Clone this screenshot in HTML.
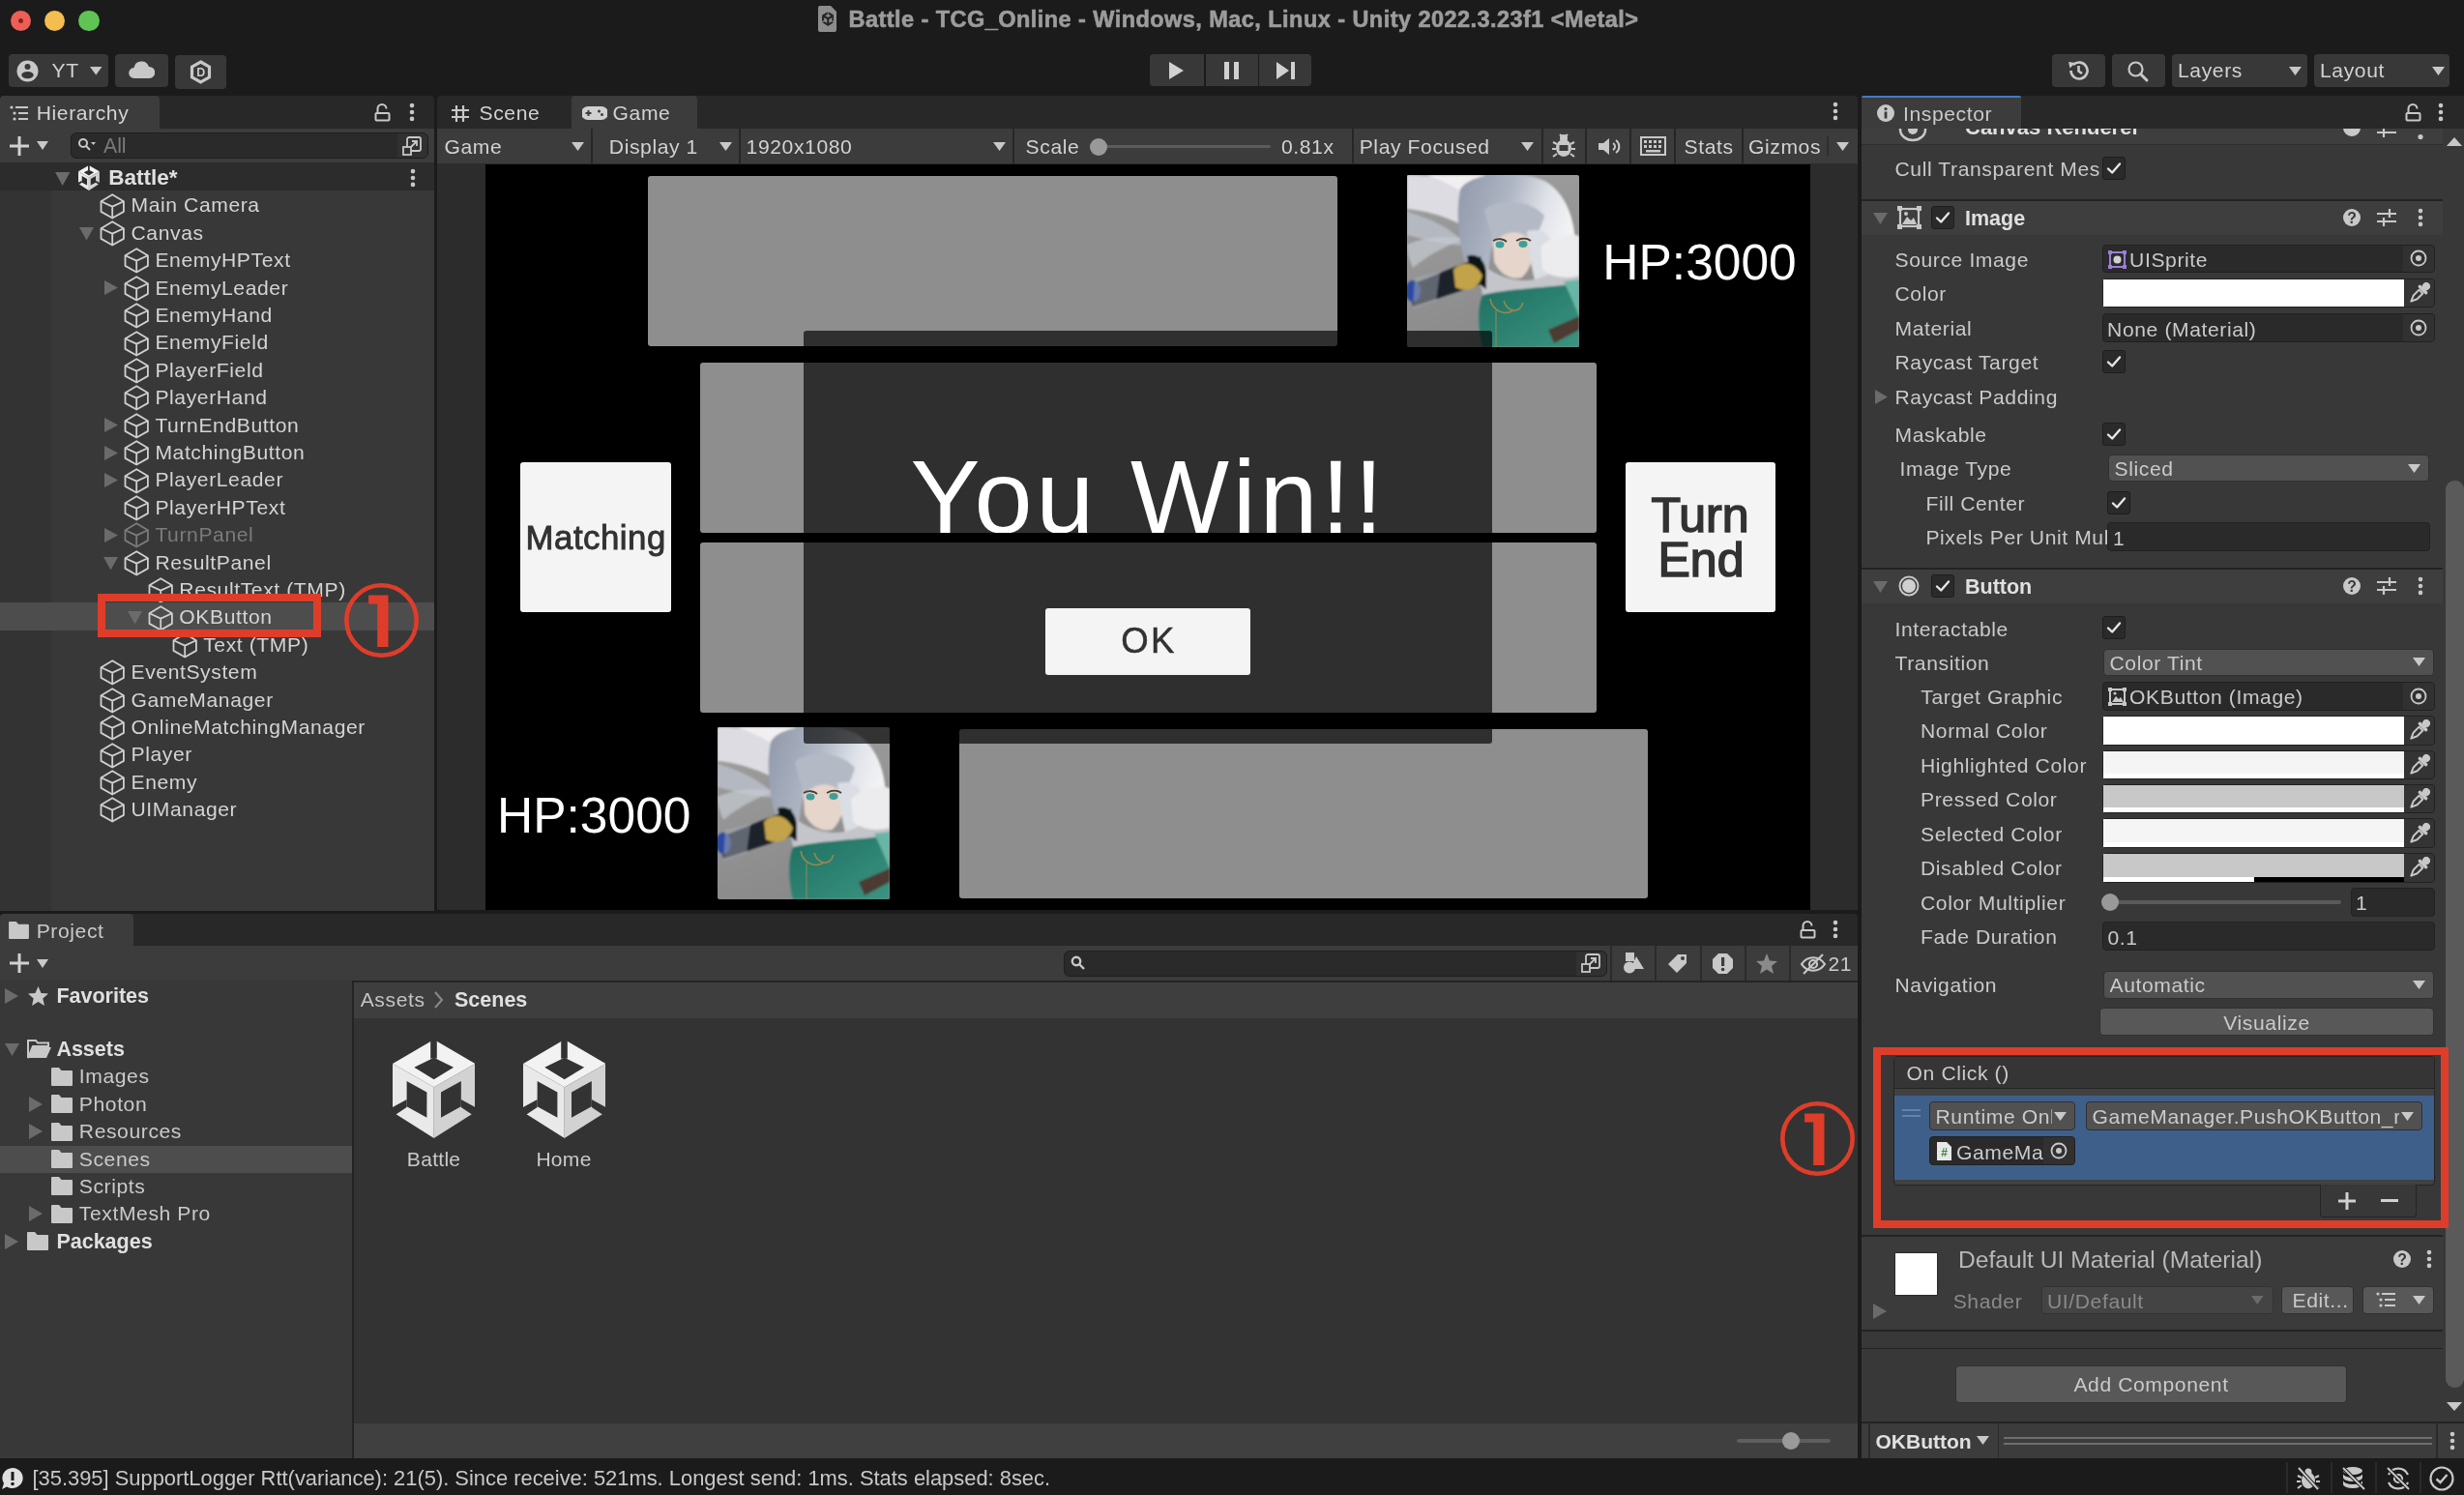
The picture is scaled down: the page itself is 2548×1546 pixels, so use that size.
<!DOCTYPE html><html><head><meta charset="utf-8"><style>
*{margin:0;padding:0;box-sizing:border-box}
html,body{width:2548px;height:1546px;overflow:hidden;background:#1b1b1b}
body{position:relative;font-family:"Liberation Sans",sans-serif}
.a{position:absolute}
.t{white-space:nowrap}
</style></head><body><div id="root" style="position:absolute;left:0;top:0;width:2548px;height:1546px;overflow:hidden;will-change:transform"><div class="a" style="left:0px;top:0px;width:2548px;height:97px;background:#1b1b1b;"></div>
<div class="a" style="left:10.599999999999998px;top:10.6px;width:21.600000000000005px;height:21.6px;background:#ec5f57;border-radius:50%;"></div>
<div class="a" style="left:45.7px;top:10.6px;width:21.599999999999994px;height:21.6px;background:#f4bd4f;border-radius:50%;"></div>
<div class="a" style="left:81.2px;top:10.6px;width:21.599999999999994px;height:21.6px;background:#5fc453;border-radius:50%;"></div>
<div class="a" style="left:19px;top:19px;width:5px;height:5px;background:#8e1f18;border-radius:50%;"></div>
<div class="a" style="left:0px;top:99px;width:449px;height:34px;background:#282828;border-top-left-radius:4px;border-top-right-radius:4px;"></div>
<div class="a" style="left:0px;top:99px;width:165px;height:34px;background:#3c3c3c;border-top-left-radius:4px;border-top-right-radius:4px;"></div>
<div class="a" style="left:0px;top:133px;width:449px;height:35px;background:#3c3c3c;"></div>
<div class="a" style="left:0px;top:168px;width:449px;height:29px;background:#2c2c2c;"></div>
<div class="a" style="left:0px;top:197px;width:449px;height:745px;background:#383838;"></div>
<div class="a" style="left:0px;top:197px;width:53px;height:745px;background:#333333;"></div>
<div class="a" style="left:452px;top:99px;width:1469px;height:34px;background:#282828;border-top-left-radius:4px;border-top-right-radius:4px;"></div>
<div class="a" style="left:591px;top:99px;width:130px;height:34px;background:#3c3c3c;border-top-left-radius:4px;border-top-right-radius:4px;"></div>
<div class="a" style="left:452px;top:133px;width:1469px;height:36px;background:#3c3c3c;"></div>
<div class="a" style="left:452px;top:169px;width:1469px;height:772px;background:#2c2c2c;"></div>
<div class="a" style="left:502px;top:170px;width:1370px;height:771px;background:#000000;"></div>
<div class="a" style="left:1925px;top:99px;width:623px;height:34px;background:#282828;border-top-left-radius:4px;"></div>
<div class="a" style="left:1925px;top:99px;width:165px;height:34px;background:#3c3c3c;border-top-left-radius:4px;border-top-right-radius:4px;"></div>
<div class="a" style="left:1925px;top:99px;width:165px;height:2px;background:#3f7dc4;border-top-left-radius:4px;border-top-right-radius:4px;"></div>
<div class="a" style="left:1925px;top:133px;width:623px;height:1338px;background:#383838;"></div>
<div class="a" style="left:0px;top:945px;width:1921px;height:33px;background:#282828;border-top-left-radius:4px;border-top-right-radius:4px;"></div>
<div class="a" style="left:0px;top:945px;width:138px;height:33px;background:#3c3c3c;border-top-left-radius:4px;border-top-right-radius:4px;"></div>
<div class="a" style="left:0px;top:978px;width:1921px;height:36px;background:#3c3c3c;"></div>
<div class="a" style="left:0px;top:1014px;width:364px;height:494px;background:#383838;"></div>
<div class="a" style="left:364px;top:1014px;width:2px;height:494px;background:#242424;"></div>
<div class="a" style="left:366px;top:1014px;width:1555px;height:2px;background:#242424;"></div>
<div class="a" style="left:366px;top:1016px;width:1555px;height:37px;background:#3e3e3e;"></div>
<div class="a" style="left:366px;top:1053px;width:1555px;height:419px;background:#333333;"></div>
<div class="a" style="left:366px;top:1472px;width:1555px;height:36px;background:#404040;"></div>
<div class="a" style="left:0px;top:1508px;width:2548px;height:38px;background:#1b1b1b;"></div>
<div class="a" style="left:670px;top:182px;width:713px;height:176px;background:#8e8e8e;border-radius:3px;"></div>
<svg class="a" style="left:1455px;top:181px;" width="178" height="178" viewBox="0 0 178 178">
<defs>
<linearGradient id="bg1455" x1="0" y1="0" x2="0.3" y2="1"><stop offset="0" stop-color="#a0a0a0"/><stop offset="1" stop-color="#8a8a8a"/></linearGradient>
<linearGradient id="hr1455" x1="0" y1="0" x2="1" y2="0.3"><stop offset="0" stop-color="#8f98aa"/><stop offset="0.45" stop-color="#aeb5c3"/><stop offset="0.75" stop-color="#dfe2e8"/><stop offset="1" stop-color="#f3f3f5"/></linearGradient>
<linearGradient id="ct1455" x1="0" y1="0" x2="1" y2="1"><stop offset="0" stop-color="#1f6f61"/><stop offset="1" stop-color="#3a9480"/></linearGradient>
<filter id="bl1455"><feGaussianBlur stdDeviation="1.2"/></filter>
</defs>
<rect width="178" height="178" rx="2" fill="url(#bg1455)"/>
<g filter="url(#bl1455)">
<path d="M0 0 C30 0 60 5 82 30 C88 45 85 58 78 66 C60 50 30 38 0 35Z" fill="#dcdce2"/>
<path d="M20 0 H80 C95 15 100 30 95 48 C75 28 50 10 20 0Z" fill="#f2eff0"/>
<path d="M0 38 C25 45 45 55 62 72 C50 74 30 70 0 62Z" fill="#b9bdc8" opacity="0.85"/>
<path d="M0 72 C18 64 40 62 58 66 C45 72 25 80 6 96 C2 86 0 80 0 72Z" fill="#c6cad2" opacity="0.7"/>
<path d="M55 15 C65 -3 115 -6 142 6 C168 20 176 55 174 85 C172 100 166 112 156 118 C146 108 138 96 134 78 L128 60 C112 54 98 58 88 74 C84 90 86 106 76 116 C64 106 56 84 54 60 C52 45 52 30 55 15Z" fill="url(#hr1455)"/>
<path d="M88 60 C100 55 118 55 130 60 C133 78 130 95 119 106 C106 109 96 102 90 90Z" fill="#e6d5ca"/>
<path d="M80 36 C92 24 128 24 142 42 C138 56 134 62 128 68 C118 56 102 56 90 70 C86 58 82 46 80 36Z" fill="#b3bac6"/>
<path d="M124 58 C138 54 152 60 154 88 C152 108 146 118 136 122 C130 106 127 86 124 58Z" fill="#dadde3"/>
<path d="M72 86 C92 110 128 116 150 100 C160 86 170 72 178 64 L178 122 C150 128 112 132 78 124Z" fill="#c4c5ca"/>
<path d="M138 74 C152 60 178 60 178 64 L178 104 C165 108 150 106 140 98Z" fill="#ececee"/>
<path d="M78 124 C100 118 150 116 178 112 L178 178 L78 178 C74 160 72 140 78 124Z" fill="url(#ct1455)"/>
<path d="M162 110 L178 108 L178 146 C172 132 168 122 162 110Z" fill="#6ab6a6"/>
<path d="M2 114 C28 104 52 94 76 84 L82 112 C64 116 38 126 6 136Z" fill="#1a202b"/>
<path d="M62 84 C70 80 80 86 82 100 L82 118 C74 114 66 104 62 84Z" fill="#111418"/>
<path d="M48 98 C58 88 70 90 78 104 C74 118 62 122 50 116Z" fill="#c2a34a"/>
<ellipse cx="6" cy="120" rx="8" ry="11" fill="#2a48a0"/>
<path d="M8 106 L34 100 L30 130 L6 138Z" fill="#a6acb6" opacity="0.5"/>
<path d="M146 160 L178 146 L178 160 L152 174Z" fill="#4b3a30"/>
</g>
<g fill="none" stroke="#a08a50" stroke-width="1.6" opacity="0.9"><path d="M86 128 C88 140 100 146 110 140"/><path d="M100 130 C104 142 116 144 120 132"/><path d="M92 140 V178" stroke-width="1"/></g>
<path d="M89 68 C94 65 100 66 103 69" stroke="#4b3b36" stroke-width="1.8" fill="none"/>
<path d="M113 68 C118 65 124 65 128 68" stroke="#4b3b36" stroke-width="1.8" fill="none"/>
<ellipse cx="96" cy="72" rx="4.5" ry="3.4" fill="#3e9f96"/>
<ellipse cx="120" cy="71.5" rx="4.5" ry="3.4" fill="#3e9f96"/>
</svg>
<div class="a t" style="left:1657.3px;top:240.60000000000002px;line-height:60px;font-size:51.5px;color:#ffffff;">HP:3000</div>
<div class="a" style="left:538px;top:478px;width:156px;height:155px;background:#f4f4f4;border-radius:3px;"></div>
<div class="a t" style="left:516.2px;width:200px;text-align:center;top:536.2px;line-height:40px;font-size:34.8px;color:#323232;letter-spacing:0.5px;-webkit-text-stroke:0.9px #323232;">Matching</div>
<div class="a" style="left:1681px;top:478px;width:155px;height:155px;background:#f4f4f4;border-radius:3px;"></div>
<div class="a t" style="left:1658.0px;width:200px;text-align:center;top:510.20000000000005px;line-height:46px;font-size:50px;color:#323232;-webkit-text-stroke:1.6px #323232;">Turn</div>
<div class="a t" style="left:1659.0px;width:200px;text-align:center;top:555.7px;line-height:46px;font-size:50px;color:#323232;-webkit-text-stroke:1.6px #323232;">End</div>
<div class="a" style="left:724px;top:375px;width:927px;height:176px;background:#8e8e8e;border-radius:3px;"></div>
<div class="a" style="left:724px;top:560.5px;width:927px;height:176.5px;background:#8e8e8e;border-radius:3px;"></div>
<svg class="a" style="left:741.5px;top:752px;" width="178" height="178" viewBox="0 0 178 178">
<defs>
<linearGradient id="bg741" x1="0" y1="0" x2="0.3" y2="1"><stop offset="0" stop-color="#a0a0a0"/><stop offset="1" stop-color="#8a8a8a"/></linearGradient>
<linearGradient id="hr741" x1="0" y1="0" x2="1" y2="0.3"><stop offset="0" stop-color="#8f98aa"/><stop offset="0.45" stop-color="#aeb5c3"/><stop offset="0.75" stop-color="#dfe2e8"/><stop offset="1" stop-color="#f3f3f5"/></linearGradient>
<linearGradient id="ct741" x1="0" y1="0" x2="1" y2="1"><stop offset="0" stop-color="#1f6f61"/><stop offset="1" stop-color="#3a9480"/></linearGradient>
<filter id="bl741"><feGaussianBlur stdDeviation="1.2"/></filter>
</defs>
<rect width="178" height="178" rx="2" fill="url(#bg741)"/>
<g filter="url(#bl741)">
<path d="M0 0 C30 0 60 5 82 30 C88 45 85 58 78 66 C60 50 30 38 0 35Z" fill="#dcdce2"/>
<path d="M20 0 H80 C95 15 100 30 95 48 C75 28 50 10 20 0Z" fill="#f2eff0"/>
<path d="M0 38 C25 45 45 55 62 72 C50 74 30 70 0 62Z" fill="#b9bdc8" opacity="0.85"/>
<path d="M0 72 C18 64 40 62 58 66 C45 72 25 80 6 96 C2 86 0 80 0 72Z" fill="#c6cad2" opacity="0.7"/>
<path d="M55 15 C65 -3 115 -6 142 6 C168 20 176 55 174 85 C172 100 166 112 156 118 C146 108 138 96 134 78 L128 60 C112 54 98 58 88 74 C84 90 86 106 76 116 C64 106 56 84 54 60 C52 45 52 30 55 15Z" fill="url(#hr741)"/>
<path d="M88 60 C100 55 118 55 130 60 C133 78 130 95 119 106 C106 109 96 102 90 90Z" fill="#e6d5ca"/>
<path d="M80 36 C92 24 128 24 142 42 C138 56 134 62 128 68 C118 56 102 56 90 70 C86 58 82 46 80 36Z" fill="#b3bac6"/>
<path d="M124 58 C138 54 152 60 154 88 C152 108 146 118 136 122 C130 106 127 86 124 58Z" fill="#dadde3"/>
<path d="M72 86 C92 110 128 116 150 100 C160 86 170 72 178 64 L178 122 C150 128 112 132 78 124Z" fill="#c4c5ca"/>
<path d="M138 74 C152 60 178 60 178 64 L178 104 C165 108 150 106 140 98Z" fill="#ececee"/>
<path d="M78 124 C100 118 150 116 178 112 L178 178 L78 178 C74 160 72 140 78 124Z" fill="url(#ct741)"/>
<path d="M162 110 L178 108 L178 146 C172 132 168 122 162 110Z" fill="#6ab6a6"/>
<path d="M2 114 C28 104 52 94 76 84 L82 112 C64 116 38 126 6 136Z" fill="#1a202b"/>
<path d="M62 84 C70 80 80 86 82 100 L82 118 C74 114 66 104 62 84Z" fill="#111418"/>
<path d="M48 98 C58 88 70 90 78 104 C74 118 62 122 50 116Z" fill="#c2a34a"/>
<ellipse cx="6" cy="120" rx="8" ry="11" fill="#2a48a0"/>
<path d="M8 106 L34 100 L30 130 L6 138Z" fill="#a6acb6" opacity="0.5"/>
<path d="M146 160 L178 146 L178 160 L152 174Z" fill="#4b3a30"/>
</g>
<g fill="none" stroke="#a08a50" stroke-width="1.6" opacity="0.9"><path d="M86 128 C88 140 100 146 110 140"/><path d="M100 130 C104 142 116 144 120 132"/><path d="M92 140 V178" stroke-width="1"/></g>
<path d="M89 68 C94 65 100 66 103 69" stroke="#4b3b36" stroke-width="1.8" fill="none"/>
<path d="M113 68 C118 65 124 65 128 68" stroke="#4b3b36" stroke-width="1.8" fill="none"/>
<ellipse cx="96" cy="72" rx="4.5" ry="3.4" fill="#3e9f96"/>
<ellipse cx="120" cy="71.5" rx="4.5" ry="3.4" fill="#3e9f96"/>
</svg>
<div class="a t" style="left:514px;top:813.2px;line-height:60px;font-size:51.5px;color:#ffffff;">HP:3000</div>
<div class="a" style="left:992px;top:754px;width:712px;height:175px;background:#8e8e8e;border-radius:3px;"></div>
<div class="a" style="left:831px;top:342px;width:712px;height:427px;background:rgba(0,0,0,0.67);border-radius:3px;"></div>
<div class="a" style="left:831px;top:400px;width:712px;height:151.4px;overflow:hidden"><div class="a t" style="left:110.5px;top:49px;line-height:130px;font-size:108px;letter-spacing:3.8px;color:#fff">You Win!!</div></div>
<div class="a" style="left:1081px;top:628.5px;width:212px;height:69.0px;background:#f4f4f4;border-radius:3px;"></div>
<div class="a t" style="left:1128.0px;width:120px;text-align:center;top:642.5px;line-height:40px;font-size:36.5px;color:#323232;letter-spacing:2.5px;-webkit-text-stroke:0.5px #323232;">OK</div>
<svg class="a" style="left:10px;top:108px;" width="20" height="18" viewBox="0 0 20 18"><g fill="#c8c8c8"><circle cx="2" cy="3" r="1.6"/><rect x="6" y="2" width="13" height="2"/><circle cx="5" cy="9" r="1.6"/><rect x="9" y="8" width="10" height="2"/><circle cx="5" cy="15" r="1.6"/><rect x="9" y="14" width="10" height="2"/></g></svg>
<div class="a t" style="left:37.7px;top:102.0px;line-height:30px;font-size:21.1px;color:#d4d4d4;letter-spacing:0.6px;">Hierarchy</div>
<svg class="a" style="left:387px;top:106px;" width="17" height="20" viewBox="0 0 17 20"><g fill="none" stroke="#c8c8c8" stroke-width="2"><path d="M3.5 10.5 V6.5 a4.5 4.5 0 0 1 9 0"/><rect x="1.5" y="11" width="14" height="7.5" rx="1"/></g></svg>
<svg class="a" style="left:421.7px;top:102px;" width="8" height="28" viewBox="0 0 8 28"><circle cx="4" cy="7.1" r="2.3" fill="#c8c8c8"/><circle cx="4" cy="14.0" r="2.3" fill="#c8c8c8"/><circle cx="4" cy="20.9" r="2.3" fill="#c8c8c8"/></svg>
<svg class="a" style="left:9px;top:140px;" width="22" height="22" viewBox="0 0 22 22"><path d="M11 1 V21 M1 11 H21" stroke="#d0d0d0" stroke-width="3"/></svg>
<svg class="a" style="left:38px;top:146px;" width="12" height="9" viewBox="0 0 12 9"><path d="M0 0 L12 0 L6.0 9 Z" fill="#c8c8c8"/></svg>
<div class="a" style="left:73px;top:137px;width:370px;height:27px;background:#2a2a2a;border:1px solid #1f1f1f;border-radius:6px;"></div>
<div class="a" style="left:411px;top:138px;width:31px;height:25px;background:#313131;border-radius:0 5px 5px 0;"></div>
<svg class="a" style="left:80px;top:142px;" width="20" height="17" viewBox="0 0 20 17"><g fill="none" stroke="#c8c8c8" stroke-width="2"><circle cx="6" cy="6" r="4"/><path d="M9 9 L13 13"/></g><path d="M14 5 L19 5 L16.5 8Z" fill="#c8c8c8"/></svg>
<div class="a t" style="left:107px;top:136.0px;line-height:30px;font-size:21.2px;color:#7a7a7a;">All</div>
<svg class="a" style="left:415px;top:140px;" width="24" height="22" viewBox="0 0 24 22"><g fill="none" stroke="#c8c8c8" stroke-width="1.8"><rect x="2" y="12" width="8" height="8"/><path d="M6 12 V4 a2 2 0 0 1 2-2 H18 a2 2 0 0 1 2 2 V14 a2 2 0 0 1-2 2 H10"/><path d="M9 13 L16 6 M11 6 H16 V11"/></g></svg>
<svg class="a" style="left:56.8px;top:178px;" width="15.4" height="14" viewBox="0 0 15.4 14"><path d="M0 0 L15.4 0 L7.7 14 Z" fill="#6b6b6b"/></svg>
<svg class="a" style="left:81.2px;top:171.2px;" width="21.8" height="26" viewBox="0 0 85.4 102"><path d="M0 25 L42.7 0 L85.4 25 L42.7 49.2Z" fill="#f2f2f2"/>
<path d="M0 25 L42.7 49.2 L42.7 102 L0 75Z" fill="#e9e9e9"/>
<path d="M85.4 25 L42.7 49.2 L42.7 102 L85.4 75Z" fill="#d2d2d2"/>
<g fill="#2c2c2c">
<path d="M39.2 -1 H45.8 V19.6 H39.2Z"/>
<path d="M22.3 28.8 L42.7 18.8 L63.1 28.8 L42.7 41.2Z"/>
<path d="M14.6 43 L35.4 54.6 L35.4 80.8 L14.6 69.2Z"/>
<path d="M70.8 43 L50 54.6 L50 80.8 L70.8 69.2Z"/>
<path d="M-1 70.5 L14.6 62 L14.6 70 L1.9 78.5 L-1 78.5Z"/>
<path d="M86.4 70.5 L70.8 62 L70.8 70 L83.5 78.5 L86.4 78.5Z"/>
</g></svg>
<div class="a t" style="left:112.3px;top:169.0px;line-height:30px;font-size:22.5px;color:#e0e0e0;font-weight:bold;">Battle*</div>
<svg class="a" style="left:423px;top:170px;" width="8" height="28" viewBox="0 0 8 28"><circle cx="4" cy="7.1" r="2.3" fill="#c8c8c8"/><circle cx="4" cy="14.0" r="2.3" fill="#c8c8c8"/><circle cx="4" cy="20.9" r="2.3" fill="#c8c8c8"/></svg>
<svg class="a" style="left:103.0px;top:199.5px;" width="26" height="27" viewBox="0 0 26 27"><g fill="none" stroke="#d0d0d0" stroke-width="1.8" stroke-linejoin="round"><path d="M13.2 1.2 L24.9 8.2 L24.9 18.9 L13.2 25.5 L1.5 18.9 L1.5 8.2 Z"/><path d="M1.5 8.2 L13.2 13.6 L24.9 8.2 M13.2 13.6 L13.2 25.5"/></g></svg>
<div class="a t" style="left:135.5px;top:197.4px;line-height:30px;font-size:21.1px;color:#d4d4d4;letter-spacing:0.6px;">Main Camera</div>
<svg class="a" style="left:103.0px;top:227.9px;" width="26" height="27" viewBox="0 0 26 27"><g fill="none" stroke="#d0d0d0" stroke-width="1.8" stroke-linejoin="round"><path d="M13.2 1.2 L24.9 8.2 L24.9 18.9 L13.2 25.5 L1.5 18.9 L1.5 8.2 Z"/><path d="M1.5 8.2 L13.2 13.6 L24.9 8.2 M13.2 13.6 L13.2 25.5"/></g></svg>
<svg class="a" style="left:82.0px;top:234.8px;" width="15" height="13.5" viewBox="0 0 15 13.5"><path d="M0 0 L15 0 L7.5 13.5 Z" fill="#6b6b6b"/></svg>
<div class="a t" style="left:135.5px;top:225.8px;line-height:30px;font-size:21.1px;color:#d4d4d4;letter-spacing:0.6px;">Canvas</div>
<svg class="a" style="left:127.9px;top:256.3px;" width="26" height="27" viewBox="0 0 26 27"><g fill="none" stroke="#d0d0d0" stroke-width="1.8" stroke-linejoin="round"><path d="M13.2 1.2 L24.9 8.2 L24.9 18.9 L13.2 25.5 L1.5 18.9 L1.5 8.2 Z"/><path d="M1.5 8.2 L13.2 13.6 L24.9 8.2 M13.2 13.6 L13.2 25.5"/></g></svg>
<div class="a t" style="left:160.4px;top:254.2px;line-height:30px;font-size:21.1px;color:#d4d4d4;letter-spacing:0.6px;">EnemyHPText</div>
<svg class="a" style="left:127.9px;top:284.70000000000005px;" width="26" height="27" viewBox="0 0 26 27"><g fill="none" stroke="#d0d0d0" stroke-width="1.8" stroke-linejoin="round"><path d="M13.2 1.2 L24.9 8.2 L24.9 18.9 L13.2 25.5 L1.5 18.9 L1.5 8.2 Z"/><path d="M1.5 8.2 L13.2 13.6 L24.9 8.2 M13.2 13.6 L13.2 25.5"/></g></svg>
<svg class="a" style="left:107.9px;top:290.1px;" width="14" height="15" viewBox="0 0 14 15"><path d="M0 0 L14 7.5 L0 15 Z" fill="#6b6b6b"/></svg>
<div class="a t" style="left:160.4px;top:282.6px;line-height:30px;font-size:21.1px;color:#d4d4d4;letter-spacing:0.6px;">EnemyLeader</div>
<svg class="a" style="left:127.9px;top:313.1px;" width="26" height="27" viewBox="0 0 26 27"><g fill="none" stroke="#d0d0d0" stroke-width="1.8" stroke-linejoin="round"><path d="M13.2 1.2 L24.9 8.2 L24.9 18.9 L13.2 25.5 L1.5 18.9 L1.5 8.2 Z"/><path d="M1.5 8.2 L13.2 13.6 L24.9 8.2 M13.2 13.6 L13.2 25.5"/></g></svg>
<div class="a t" style="left:160.4px;top:311.0px;line-height:30px;font-size:21.1px;color:#d4d4d4;letter-spacing:0.6px;">EnemyHand</div>
<svg class="a" style="left:127.9px;top:341.5px;" width="26" height="27" viewBox="0 0 26 27"><g fill="none" stroke="#d0d0d0" stroke-width="1.8" stroke-linejoin="round"><path d="M13.2 1.2 L24.9 8.2 L24.9 18.9 L13.2 25.5 L1.5 18.9 L1.5 8.2 Z"/><path d="M1.5 8.2 L13.2 13.6 L24.9 8.2 M13.2 13.6 L13.2 25.5"/></g></svg>
<div class="a t" style="left:160.4px;top:339.4px;line-height:30px;font-size:21.1px;color:#d4d4d4;letter-spacing:0.6px;">EnemyField</div>
<svg class="a" style="left:127.9px;top:369.9px;" width="26" height="27" viewBox="0 0 26 27"><g fill="none" stroke="#d0d0d0" stroke-width="1.8" stroke-linejoin="round"><path d="M13.2 1.2 L24.9 8.2 L24.9 18.9 L13.2 25.5 L1.5 18.9 L1.5 8.2 Z"/><path d="M1.5 8.2 L13.2 13.6 L24.9 8.2 M13.2 13.6 L13.2 25.5"/></g></svg>
<div class="a t" style="left:160.4px;top:367.79999999999995px;line-height:30px;font-size:21.1px;color:#d4d4d4;letter-spacing:0.6px;">PlayerField</div>
<svg class="a" style="left:127.9px;top:398.3px;" width="26" height="27" viewBox="0 0 26 27"><g fill="none" stroke="#d0d0d0" stroke-width="1.8" stroke-linejoin="round"><path d="M13.2 1.2 L24.9 8.2 L24.9 18.9 L13.2 25.5 L1.5 18.9 L1.5 8.2 Z"/><path d="M1.5 8.2 L13.2 13.6 L24.9 8.2 M13.2 13.6 L13.2 25.5"/></g></svg>
<div class="a t" style="left:160.4px;top:396.2px;line-height:30px;font-size:21.1px;color:#d4d4d4;letter-spacing:0.6px;">PlayerHand</div>
<svg class="a" style="left:127.9px;top:426.70000000000005px;" width="26" height="27" viewBox="0 0 26 27"><g fill="none" stroke="#d0d0d0" stroke-width="1.8" stroke-linejoin="round"><path d="M13.2 1.2 L24.9 8.2 L24.9 18.9 L13.2 25.5 L1.5 18.9 L1.5 8.2 Z"/><path d="M1.5 8.2 L13.2 13.6 L24.9 8.2 M13.2 13.6 L13.2 25.5"/></g></svg>
<svg class="a" style="left:107.9px;top:432.1px;" width="14" height="15" viewBox="0 0 14 15"><path d="M0 0 L14 7.5 L0 15 Z" fill="#6b6b6b"/></svg>
<div class="a t" style="left:160.4px;top:424.6px;line-height:30px;font-size:21.1px;color:#d4d4d4;letter-spacing:0.6px;">TurnEndButton</div>
<svg class="a" style="left:127.9px;top:455.1px;" width="26" height="27" viewBox="0 0 26 27"><g fill="none" stroke="#d0d0d0" stroke-width="1.8" stroke-linejoin="round"><path d="M13.2 1.2 L24.9 8.2 L24.9 18.9 L13.2 25.5 L1.5 18.9 L1.5 8.2 Z"/><path d="M1.5 8.2 L13.2 13.6 L24.9 8.2 M13.2 13.6 L13.2 25.5"/></g></svg>
<svg class="a" style="left:107.9px;top:460.5px;" width="14" height="15" viewBox="0 0 14 15"><path d="M0 0 L14 7.5 L0 15 Z" fill="#6b6b6b"/></svg>
<div class="a t" style="left:160.4px;top:453.0px;line-height:30px;font-size:21.1px;color:#d4d4d4;letter-spacing:0.6px;">MatchingButton</div>
<svg class="a" style="left:127.9px;top:483.5px;" width="26" height="27" viewBox="0 0 26 27"><g fill="none" stroke="#d0d0d0" stroke-width="1.8" stroke-linejoin="round"><path d="M13.2 1.2 L24.9 8.2 L24.9 18.9 L13.2 25.5 L1.5 18.9 L1.5 8.2 Z"/><path d="M1.5 8.2 L13.2 13.6 L24.9 8.2 M13.2 13.6 L13.2 25.5"/></g></svg>
<svg class="a" style="left:107.9px;top:488.9px;" width="14" height="15" viewBox="0 0 14 15"><path d="M0 0 L14 7.5 L0 15 Z" fill="#6b6b6b"/></svg>
<div class="a t" style="left:160.4px;top:481.4px;line-height:30px;font-size:21.1px;color:#d4d4d4;letter-spacing:0.6px;">PlayerLeader</div>
<svg class="a" style="left:127.9px;top:511.9px;" width="26" height="27" viewBox="0 0 26 27"><g fill="none" stroke="#d0d0d0" stroke-width="1.8" stroke-linejoin="round"><path d="M13.2 1.2 L24.9 8.2 L24.9 18.9 L13.2 25.5 L1.5 18.9 L1.5 8.2 Z"/><path d="M1.5 8.2 L13.2 13.6 L24.9 8.2 M13.2 13.6 L13.2 25.5"/></g></svg>
<div class="a t" style="left:160.4px;top:509.79999999999995px;line-height:30px;font-size:21.1px;color:#d4d4d4;letter-spacing:0.6px;">PlayerHPText</div>
<svg class="a" style="left:127.9px;top:540.3px;" width="26" height="27" viewBox="0 0 26 27"><g fill="none" stroke="#7b7b7b" stroke-width="1.8" stroke-linejoin="round"><path d="M13.2 1.2 L24.9 8.2 L24.9 18.9 L13.2 25.5 L1.5 18.9 L1.5 8.2 Z"/><path d="M1.5 8.2 L13.2 13.6 L24.9 8.2 M13.2 13.6 L13.2 25.5"/></g></svg>
<svg class="a" style="left:107.9px;top:545.6999999999999px;" width="14" height="15" viewBox="0 0 14 15"><path d="M0 0 L14 7.5 L0 15 Z" fill="#6b6b6b"/></svg>
<div class="a t" style="left:160.4px;top:538.1999999999999px;line-height:30px;font-size:21.1px;color:#7b7b7b;letter-spacing:0.6px;">TurnPanel</div>
<svg class="a" style="left:127.9px;top:568.7px;" width="26" height="27" viewBox="0 0 26 27"><g fill="none" stroke="#d0d0d0" stroke-width="1.8" stroke-linejoin="round"><path d="M13.2 1.2 L24.9 8.2 L24.9 18.9 L13.2 25.5 L1.5 18.9 L1.5 8.2 Z"/><path d="M1.5 8.2 L13.2 13.6 L24.9 8.2 M13.2 13.6 L13.2 25.5"/></g></svg>
<svg class="a" style="left:106.9px;top:575.6px;" width="15" height="13.5" viewBox="0 0 15 13.5"><path d="M0 0 L15 0 L7.5 13.5 Z" fill="#6b6b6b"/></svg>
<div class="a t" style="left:160.4px;top:566.6px;line-height:30px;font-size:21.1px;color:#d4d4d4;letter-spacing:0.6px;">ResultPanel</div>
<svg class="a" style="left:152.8px;top:597.1px;" width="26" height="27" viewBox="0 0 26 27"><g fill="none" stroke="#d0d0d0" stroke-width="1.8" stroke-linejoin="round"><path d="M13.2 1.2 L24.9 8.2 L24.9 18.9 L13.2 25.5 L1.5 18.9 L1.5 8.2 Z"/><path d="M1.5 8.2 L13.2 13.6 L24.9 8.2 M13.2 13.6 L13.2 25.5"/></g></svg>
<div class="a t" style="left:185.3px;top:595.0px;line-height:30px;font-size:21.1px;color:#d4d4d4;letter-spacing:0.6px;">ResultText (TMP)</div>
<div class="a" style="left:0px;top:623.0px;width:449px;height:28.799999999999955px;background:#4d4d4d;"></div>
<svg class="a" style="left:152.8px;top:625.5px;" width="26" height="27" viewBox="0 0 26 27"><g fill="none" stroke="#d0d0d0" stroke-width="1.8" stroke-linejoin="round"><path d="M13.2 1.2 L24.9 8.2 L24.9 18.9 L13.2 25.5 L1.5 18.9 L1.5 8.2 Z"/><path d="M1.5 8.2 L13.2 13.6 L24.9 8.2 M13.2 13.6 L13.2 25.5"/></g></svg>
<svg class="a" style="left:131.8px;top:632.4px;" width="15" height="13.5" viewBox="0 0 15 13.5"><path d="M0 0 L15 0 L7.5 13.5 Z" fill="#6b6b6b"/></svg>
<div class="a t" style="left:185.3px;top:623.4px;line-height:30px;font-size:21.1px;color:#d4d4d4;letter-spacing:0.6px;">OKButton</div>
<svg class="a" style="left:177.7px;top:653.9px;" width="26" height="27" viewBox="0 0 26 27"><g fill="none" stroke="#d0d0d0" stroke-width="1.8" stroke-linejoin="round"><path d="M13.2 1.2 L24.9 8.2 L24.9 18.9 L13.2 25.5 L1.5 18.9 L1.5 8.2 Z"/><path d="M1.5 8.2 L13.2 13.6 L24.9 8.2 M13.2 13.6 L13.2 25.5"/></g></svg>
<div class="a t" style="left:210.2px;top:651.8px;line-height:30px;font-size:21.1px;color:#d4d4d4;letter-spacing:0.6px;">Text (TMP)</div>
<svg class="a" style="left:103.0px;top:682.3px;" width="26" height="27" viewBox="0 0 26 27"><g fill="none" stroke="#d0d0d0" stroke-width="1.8" stroke-linejoin="round"><path d="M13.2 1.2 L24.9 8.2 L24.9 18.9 L13.2 25.5 L1.5 18.9 L1.5 8.2 Z"/><path d="M1.5 8.2 L13.2 13.6 L24.9 8.2 M13.2 13.6 L13.2 25.5"/></g></svg>
<div class="a t" style="left:135.5px;top:680.1999999999999px;line-height:30px;font-size:21.1px;color:#d4d4d4;letter-spacing:0.6px;">EventSystem</div>
<svg class="a" style="left:103.0px;top:710.7px;" width="26" height="27" viewBox="0 0 26 27"><g fill="none" stroke="#d0d0d0" stroke-width="1.8" stroke-linejoin="round"><path d="M13.2 1.2 L24.9 8.2 L24.9 18.9 L13.2 25.5 L1.5 18.9 L1.5 8.2 Z"/><path d="M1.5 8.2 L13.2 13.6 L24.9 8.2 M13.2 13.6 L13.2 25.5"/></g></svg>
<div class="a t" style="left:135.5px;top:708.6px;line-height:30px;font-size:21.1px;color:#d4d4d4;letter-spacing:0.6px;">GameManager</div>
<svg class="a" style="left:103.0px;top:739.1px;" width="26" height="27" viewBox="0 0 26 27"><g fill="none" stroke="#d0d0d0" stroke-width="1.8" stroke-linejoin="round"><path d="M13.2 1.2 L24.9 8.2 L24.9 18.9 L13.2 25.5 L1.5 18.9 L1.5 8.2 Z"/><path d="M1.5 8.2 L13.2 13.6 L24.9 8.2 M13.2 13.6 L13.2 25.5"/></g></svg>
<div class="a t" style="left:135.5px;top:737.0px;line-height:30px;font-size:21.1px;color:#d4d4d4;letter-spacing:0.6px;">OnlineMatchingManager</div>
<svg class="a" style="left:103.0px;top:767.5px;" width="26" height="27" viewBox="0 0 26 27"><g fill="none" stroke="#d0d0d0" stroke-width="1.8" stroke-linejoin="round"><path d="M13.2 1.2 L24.9 8.2 L24.9 18.9 L13.2 25.5 L1.5 18.9 L1.5 8.2 Z"/><path d="M1.5 8.2 L13.2 13.6 L24.9 8.2 M13.2 13.6 L13.2 25.5"/></g></svg>
<div class="a t" style="left:135.5px;top:765.4px;line-height:30px;font-size:21.1px;color:#d4d4d4;letter-spacing:0.6px;">Player</div>
<svg class="a" style="left:103.0px;top:795.9px;" width="26" height="27" viewBox="0 0 26 27"><g fill="none" stroke="#d0d0d0" stroke-width="1.8" stroke-linejoin="round"><path d="M13.2 1.2 L24.9 8.2 L24.9 18.9 L13.2 25.5 L1.5 18.9 L1.5 8.2 Z"/><path d="M1.5 8.2 L13.2 13.6 L24.9 8.2 M13.2 13.6 L13.2 25.5"/></g></svg>
<div class="a t" style="left:135.5px;top:793.8px;line-height:30px;font-size:21.1px;color:#d4d4d4;letter-spacing:0.6px;">Enemy</div>
<svg class="a" style="left:103.0px;top:824.3px;" width="26" height="27" viewBox="0 0 26 27"><g fill="none" stroke="#d0d0d0" stroke-width="1.8" stroke-linejoin="round"><path d="M13.2 1.2 L24.9 8.2 L24.9 18.9 L13.2 25.5 L1.5 18.9 L1.5 8.2 Z"/><path d="M1.5 8.2 L13.2 13.6 L24.9 8.2 M13.2 13.6 L13.2 25.5"/></g></svg>
<div class="a t" style="left:135.5px;top:822.1999999999999px;line-height:30px;font-size:21.1px;color:#d4d4d4;letter-spacing:0.6px;">UIManager</div>
<svg class="a" style="left:845px;top:6px;" width="21" height="27" viewBox="0 0 21 27"><path d="M1 2 a2 2 0 0 1 2-2 H14 L20 6 V25 a2 2 0 0 1-2 2 H3 a2 2 0 0 1-2-2Z" fill="#8d8d8d"/></svg>
<svg class="a" style="left:849.5px;top:11.5px;" width="12.5" height="15" viewBox="0 0 85.4 102"><g fill="#262626"><path d="M0 25 L42.7 0 L85.4 25 L85.4 75 L42.7 102 L0 75Z"/></g><g fill="#8d8d8d"><path d="M39.2 -1 H45.8 V19.6 H39.2Z"/><path d="M22.3 28.8 L42.7 18.8 L63.1 28.8 L42.7 41.2Z"/><path d="M14.6 43 L35.4 54.6 L35.4 80.8 L14.6 69.2Z"/><path d="M70.8 43 L50 54.6 L50 80.8 L70.8 69.2Z"/><path d="M-1 70.5 L14.6 62 L14.6 70 L1.9 78.5 L-1 78.5Z"/><path d="M86.4 70.5 L70.8 62 L70.8 70 L83.5 78.5 L86.4 78.5Z"/></g></svg>
<div class="a t" style="left:877.5px;top:5.300000000000001px;line-height:30px;font-size:23.5px;color:#9c9c9c;font-weight:bold;letter-spacing:0.45px;-webkit-text-stroke:0.6px #9c9c9c;">Battle - TCG_Online - Windows, Mac, Linux - Unity 2022.3.23f1 &lt;Metal&gt;</div>
<div class="a" style="left:9px;top:56px;width:103px;height:34px;background:#383838;border-radius:4px;"></div>
<svg class="a" style="left:17px;top:62px;" width="23" height="23" viewBox="0 0 23 23"><circle cx="11.5" cy="11.5" r="11" fill="#c8c8c8"/><circle cx="11.5" cy="7" r="3" fill="#383838"/><ellipse cx="11.5" cy="15.6" rx="6.2" ry="3.6" fill="#383838"/></svg>
<div class="a t" style="left:53.5px;top:58.0px;line-height:30px;font-size:21.1px;color:#d2d2d2;letter-spacing:0.6px;">YT</div>
<svg class="a" style="left:93px;top:69px;" width="12.5" height="8.5" viewBox="0 0 12.5 8.5"><path d="M0 0 L12.5 0 L6.25 8.5 Z" fill="#c8c8c8"/></svg>
<div class="a" style="left:119px;top:56px;width:55px;height:34px;background:#383838;border-radius:4px;"></div>
<svg class="a" style="left:133px;top:63px;" width="27" height="19" viewBox="0 0 27 19"><path d="M6 18 a5.5 5.5 0 0 1-0.5-11 a8 8 0 0 1 15.5-1 a6 6 0 0 1 0.5 12Z" fill="#c8c8c8"/></svg>
<div class="a" style="left:181px;top:57px;width:53px;height:35px;background:#383838;border-radius:4px;"></div>
<svg class="a" style="left:196px;top:62px;" width="23" height="25" viewBox="0 0 23 25"><path d="M11.5 2 L20.5 7.2 V17.8 L11.5 23 L2.5 17.8 V7.2Z" fill="none" stroke="#c8c8c8" stroke-width="3.2"/><text x="11.8" y="17.2" font-size="12.5" font-weight="bold" text-anchor="middle" fill="#c8c8c8" font-family="Liberation Sans">D</text></svg>
<div class="a" style="left:1189px;top:56px;width:167px;height:33px;background:#383838;border-radius:4px;"></div>
<div class="a" style="left:1245px;top:56px;width:1.5px;height:33px;background:#1b1b1b;"></div>
<div class="a" style="left:1300.5px;top:56px;width:1.5px;height:33px;background:#1b1b1b;"></div>
<svg class="a" style="left:1209px;top:64px;" width="16" height="18" viewBox="0 0 16 18"><path d="M0 0 L15 9 L0 18Z" fill="#d0d0d0"/></svg>
<svg class="a" style="left:1266px;top:64px;" width="16" height="18" viewBox="0 0 16 18"><rect x="0" y="0" width="5" height="18" fill="#d0d0d0"/><rect x="10" y="0" width="5" height="18" fill="#d0d0d0"/></svg>
<svg class="a" style="left:1320px;top:64px;" width="20" height="18" viewBox="0 0 20 18"><path d="M0 0 L13 9 L0 18Z" fill="#d0d0d0"/><rect x="15" y="0" width="4" height="18" fill="#d0d0d0"/></svg>
<div class="a" style="left:2122px;top:56px;width:55px;height:33.5px;background:#383838;border-radius:4px;"></div>
<svg class="a" style="left:2137px;top:61px;" width="25" height="24" viewBox="0 0 25 24"><g fill="none" stroke="#c8c8c8" stroke-width="2.6"><path d="M4.5 12 a8.5 8.5 0 1 0 2.5-6"/><path d="M12.5 7 V12.5 L16 15"/></g><path d="M2 3 L9 4 L3.5 9.5Z" fill="#c8c8c8"/></svg>
<div class="a" style="left:2184px;top:56px;width:55px;height:33.5px;background:#383838;border-radius:4px;"></div>
<svg class="a" style="left:2199px;top:62px;" width="24" height="24" viewBox="0 0 24 24"><g fill="none" stroke="#c8c8c8" stroke-width="2.2"><circle cx="9.5" cy="9.5" r="7"/><path d="M14.5 14.5 L21 21" stroke-width="3" stroke-linecap="round"/></g></svg>
<div class="a" style="left:2246px;top:56px;width:140px;height:33.5px;background:#383838;border-radius:4px;"></div>
<div class="a t" style="left:2252px;top:58.0px;line-height:30px;font-size:21.1px;color:#d2d2d2;letter-spacing:0.6px;">Layers</div>
<svg class="a" style="left:2367px;top:69px;" width="13" height="9" viewBox="0 0 13 9"><path d="M0 0 L13 0 L6.5 9 Z" fill="#c8c8c8"/></svg>
<div class="a" style="left:2393px;top:56px;width:140px;height:33.5px;background:#383838;border-radius:4px;"></div>
<div class="a t" style="left:2399px;top:58.0px;line-height:30px;font-size:21.1px;color:#d2d2d2;letter-spacing:0.6px;">Layout</div>
<svg class="a" style="left:2514.5px;top:69px;" width="13" height="9" viewBox="0 0 13 9"><path d="M0 0 L13 0 L6.5 9 Z" fill="#c8c8c8"/></svg>
<svg class="a" style="left:466px;top:108px;" width="20" height="19" viewBox="0 0 20 19"><g stroke="#c8c8c8" stroke-width="2.2"><path d="M6 1 V18 M13 1 V18 M1 6 H19 M1 13 H19"/></g></svg>
<div class="a t" style="left:495.5px;top:102.0px;line-height:30px;font-size:21.1px;color:#d2d2d2;letter-spacing:0.6px;">Scene</div>
<svg class="a" style="left:602px;top:109px;" width="26" height="16" viewBox="0 0 26 16"><path d="M6 1 H20 a6 6 0 0 1 0 14 H6 a6 6 0 0 1 0-14Z" fill="#d0d0d0"/><g fill="#3c3c3c"><rect x="3.5" y="7" width="6" height="2"/><rect x="5.5" y="5" width="2" height="6"/><circle cx="17.5" cy="6" r="1.5"/><circle cx="20.5" cy="9.5" r="1.5"/></g></svg>
<div class="a t" style="left:633.6px;top:102.0px;line-height:30px;font-size:21.1px;color:#d2d2d2;letter-spacing:0.6px;">Game</div>
<svg class="a" style="left:1893.5px;top:101px;" width="8" height="28" viewBox="0 0 8 28"><circle cx="4" cy="7.1" r="2.3" fill="#c8c8c8"/><circle cx="4" cy="14.0" r="2.3" fill="#c8c8c8"/><circle cx="4" cy="20.9" r="2.3" fill="#c8c8c8"/></svg>
<div class="a" style="left:611px;top:133px;width:2px;height:36px;background:#262626;"></div>
<div class="a" style="left:764px;top:133px;width:2px;height:36px;background:#262626;"></div>
<div class="a" style="left:1047px;top:133px;width:2px;height:36px;background:#262626;"></div>
<div class="a" style="left:1398px;top:133px;width:2px;height:36px;background:#262626;"></div>
<div class="a" style="left:1594px;top:133px;width:2px;height:36px;background:#262626;"></div>
<div class="a" style="left:1639px;top:133px;width:2px;height:36px;background:#262626;"></div>
<div class="a" style="left:1685px;top:133px;width:2px;height:36px;background:#262626;"></div>
<div class="a" style="left:1731px;top:133px;width:2px;height:36px;background:#262626;"></div>
<div class="a" style="left:1801px;top:133px;width:2px;height:36px;background:#262626;"></div>
<div class="a" style="left:1889px;top:141px;width:1.5px;height:20px;background:#2e2e2e;"></div>
<div class="a t" style="left:459.5px;top:136.5px;line-height:30px;font-size:21.1px;color:#d2d2d2;letter-spacing:0.6px;">Game</div>
<svg class="a" style="left:590.7px;top:147px;" width="13" height="9" viewBox="0 0 13 9"><path d="M0 0 L13 0 L6.5 9 Z" fill="#c8c8c8"/></svg>
<div class="a t" style="left:629.8px;top:136.5px;line-height:30px;font-size:21.1px;color:#d2d2d2;letter-spacing:0.6px;">Display 1</div>
<svg class="a" style="left:743.7px;top:147px;" width="13" height="9" viewBox="0 0 13 9"><path d="M0 0 L13 0 L6.5 9 Z" fill="#c8c8c8"/></svg>
<div class="a t" style="left:771.6px;top:136.5px;line-height:30px;font-size:21.1px;color:#d2d2d2;letter-spacing:0.6px;">1920x1080</div>
<svg class="a" style="left:1027px;top:147px;" width="13" height="9" viewBox="0 0 13 9"><path d="M0 0 L13 0 L6.5 9 Z" fill="#c8c8c8"/></svg>
<div class="a t" style="left:1060.6px;top:136.5px;line-height:30px;font-size:21.1px;color:#d2d2d2;letter-spacing:0.6px;">Scale</div>
<div class="a" style="left:1136px;top:149.5px;width:178px;height:3.0px;background:#5c5c5c;border-radius:2px;"></div>
<div class="a" style="left:1127px;top:142.5px;width:18px;height:18.0px;background:#999999;border-radius:50%;"></div>
<div class="a t" style="left:1325px;top:136.5px;line-height:30px;font-size:21.1px;color:#d2d2d2;letter-spacing:0.6px;">0.81x</div>
<div class="a t" style="left:1405.7px;top:136.5px;line-height:30px;font-size:21.1px;color:#d2d2d2;letter-spacing:0.6px;">Play Focused</div>
<svg class="a" style="left:1572.5px;top:147px;" width="13" height="9" viewBox="0 0 13 9"><path d="M0 0 L13 0 L6.5 9 Z" fill="#c8c8c8"/></svg>
<svg class="a" style="left:1604px;top:137px;" width="26" height="28" viewBox="0 0 26 28"><g fill="#c8c8c8"><ellipse cx="13" cy="16" rx="8" ry="9"/><circle cx="13" cy="6" r="4"/></g><g stroke="#c8c8c8" stroke-width="2"><path d="M2 10 L6 12 M24 10 L20 12 M1 17 H5 M25 17 H21 M2 25 L6 22 M24 25 L20 22 M9 2 L11 4 M17 2 L15 4"/></g><rect x="8.5" y="13" width="9" height="6" fill="#3c3c3c"/></svg>
<svg class="a" style="left:1652px;top:142px;" width="26" height="19" viewBox="0 0 26 19"><path d="M1 6 H6 L12 1 V18 L6 13 H1Z" fill="#c8c8c8"/><g fill="none" stroke="#c8c8c8" stroke-width="2"><path d="M16 6 a4 4 0 0 1 0 7"/><path d="M19 3 a8 8 0 0 1 0 13"/></g></svg>
<svg class="a" style="left:1696px;top:141px;" width="27" height="20" viewBox="0 0 27 20"><rect x="1" y="1" width="25" height="18" fill="none" stroke="#c8c8c8" stroke-width="2"/><g fill="#c8c8c8"><rect x="4" y="4" width="3" height="3"/><rect x="9" y="4" width="3" height="3"/><rect x="14" y="4" width="3" height="3"/><rect x="19" y="4" width="3" height="3"/><rect x="4" y="9" width="3" height="3"/><rect x="9" y="9" width="3" height="3"/><rect x="14" y="9" width="3" height="3"/><rect x="19" y="9" width="3" height="3"/><rect x="6" y="14" width="15" height="2.5"/></g></svg>
<div class="a t" style="left:1741.5px;top:136.5px;line-height:30px;font-size:21.1px;color:#d2d2d2;letter-spacing:0.6px;">Stats</div>
<div class="a t" style="left:1808px;top:136.5px;line-height:30px;font-size:21.1px;color:#d2d2d2;letter-spacing:0.6px;">Gizmos</div>
<svg class="a" style="left:1899px;top:147px;" width="13" height="9" viewBox="0 0 13 9"><path d="M0 0 L13 0 L6.5 9 Z" fill="#c8c8c8"/></svg>
<svg class="a" style="left:1941px;top:108px;" width="18" height="18" viewBox="0 0 18 18"><circle cx="9" cy="9" r="9" fill="#c8c8c8"/><rect x="7.6" y="7.5" width="2.8" height="7" fill="#3c3c3c"/><circle cx="9" cy="4.6" r="1.6" fill="#3c3c3c"/></svg>
<div class="a t" style="left:1968px;top:103.0px;line-height:30px;font-size:21.1px;color:#cacaca;letter-spacing:0.6px;">Inspector</div>
<svg class="a" style="left:2487px;top:106px;" width="17" height="20" viewBox="0 0 17 20"><g fill="none" stroke="#c8c8c8" stroke-width="2"><path d="M3.5 10.5 V6.5 a4.5 4.5 0 0 1 9 0"/><rect x="1.5" y="11" width="14" height="7.5" rx="1"/></g></svg>
<svg class="a" style="left:2520px;top:102px;" width="8" height="28" viewBox="0 0 8 28"><circle cx="4" cy="7.1" r="2.3" fill="#c8c8c8"/><circle cx="4" cy="14.0" r="2.3" fill="#c8c8c8"/><circle cx="4" cy="20.9" r="2.3" fill="#c8c8c8"/></svg>
<div class="a" style="left:2529px;top:497px;width:19px;height:938px;background:#5a5a5a;border-radius:9px;"></div>
<svg class="a" style="left:2530px;top:141px;" width="16" height="10" viewBox="0 0 16 10"><path d="M0 10 L8 1 L16 10Z" fill="#c8c8c8"/></svg>
<svg class="a" style="left:2530px;top:1450px;" width="16" height="10" viewBox="0 0 16 10"><path d="M0 0 L8 9 L16 0Z" fill="#c8c8c8"/></svg>
<div class="a" style="left:1925px;top:133px;width:601px;height:16px;overflow:hidden;background:#3e3e3e">
<div class="a t" style="left:107px;top:-16px;line-height:30px;font-size:22px;font-weight:bold;color:#e0e0e0">Canvas Renderer</div>
<svg class="a" style="left:38px;top:-12px" width="30" height="26" viewBox="0 0 30 26"><ellipse cx="15" cy="13" rx="13" ry="11" fill="none" stroke="#c8c8c8" stroke-width="2.5"/><circle cx="15" cy="13" r="5" fill="#c8c8c8"/></svg>
<svg class="a" style="left:498px;top:-10px" width="18" height="18"><circle cx="9" cy="9" r="9" fill="#c8c8c8"/></svg>
<svg class="a" style="left:532px;top:-11px" width="22" height="22"><g stroke="#c8c8c8" stroke-width="2.2"><path d="M1 7 H21 M1 15 H21"/><path d="M14 2 V11 M8 11 V20"/></g></svg>
<svg class="a" style="left:574px;top:-14px" width="8" height="28"><circle cx="4" cy="22.5" r="2.6" fill="#c8c8c8"/></svg>
</div>
<div class="a" style="left:1925px;top:149px;width:601px;height:1px;background:#2e2e2e;"></div>
<div class="a t" style="left:1959.5px;top:160.0px;line-height:30px;font-size:21.1px;color:#cacaca;letter-spacing:0.6px;">Cull Transparent Mes</div>
<div class="a" style="left:2174px;top:162px;width:24px;height:24px;background:#2a2a2a;border:1px solid #1e1e1e;border-radius:3px;"></div>
<svg class="a" style="left:2174px;top:162px;" width="24" height="24" viewBox="0 0 24 24"><path d="M6 12.5 L10.2 16.5 L18 7.5" fill="none" stroke="#e6e6e6" stroke-width="2.4" stroke-linecap="round" stroke-linejoin="round"/></svg>
<div class="a" style="left:1925px;top:206px;width:601px;height:1.5px;background:#232323;"></div>
<div class="a" style="left:1925px;top:207.5px;width:601px;height:35.5px;background:#3e3e3e;"></div>
<svg class="a" style="left:1937px;top:219.5px;" width="15" height="12" viewBox="0 0 15 12"><path d="M0 0 L15 0 L7.5 12 Z" fill="#6b6b6b"/></svg>
<svg class="a" style="left:1962px;top:213.0px;" width="25" height="24" viewBox="0 0 25 24"><rect x="3" y="3" width="19" height="18" fill="none" stroke="#c8c8c8" stroke-width="2.2"/><g fill="#c8c8c8"><rect x="0" y="0" width="5" height="5"/><rect x="20" y="0" width="5" height="5"/><rect x="0" y="19" width="5" height="5"/><rect x="20" y="19" width="5" height="5"/><path d="M5 19 L10 11 L14 15 L17 12 L20 19Z"/><circle cx="9" cy="8" r="2"/></g></svg>
<div class="a" style="left:1996.5px;top:213.0px;width:24.0px;height:24.0px;background:#2a2a2a;border:1px solid #1e1e1e;border-radius:3px;"></div>
<svg class="a" style="left:1996.5px;top:213.0px;" width="24" height="24" viewBox="0 0 24 24"><path d="M6 12.5 L10.2 16.5 L18 7.5" fill="none" stroke="#e6e6e6" stroke-width="2.4" stroke-linecap="round" stroke-linejoin="round"/></svg>
<div class="a t" style="left:2032px;top:211.0px;line-height:30px;font-size:21.5px;color:#e0e0e0;font-weight:bold;">Image</div>
<svg class="a" style="left:2423px;top:216.0px;" width="18" height="18" viewBox="0 0 18 18"><circle cx="9" cy="9" r="9" fill="#c8c8c8"/><text x="9" y="14.6" font-size="15.75" font-weight="bold" text-anchor="middle" fill="#383838" font-family="Liberation Sans">?</text></svg>
<svg class="a" style="left:2457px;top:214.0px;" width="22" height="22" viewBox="0 0 22 22"><g stroke="#c8c8c8" stroke-width="2.2"><path d="M1 7 H21 M1 15 H21"/><path d="M14 2 V11 M8 11 V20"/></g></svg>
<svg class="a" style="left:2499px;top:211.0px;" width="8" height="28" viewBox="0 0 8 28"><circle cx="4" cy="7.1" r="2.3" fill="#c8c8c8"/><circle cx="4" cy="14.0" r="2.3" fill="#c8c8c8"/><circle cx="4" cy="20.9" r="2.3" fill="#c8c8c8"/></svg>
<div class="a t" style="left:1959.5px;top:253.5px;line-height:30px;font-size:21.1px;color:#cacaca;letter-spacing:0.6px;">Source Image</div>
<div class="a" style="left:2173.6px;top:252.6px;width:344.4000000000001px;height:29.700000000000017px;background:#2a2a2a;border:1px solid #212121;border-radius:4px;"></div>
<div class="a" style="left:2485px;top:253.6px;width:32px;height:27.700000000000017px;background:#313131;border-radius:0 3px 3px 0;"></div>
<svg class="a" style="left:2492px;top:258.45px;" width="18" height="18" viewBox="0 0 18 18"><circle cx="9" cy="9" r="7.5" fill="none" stroke="#c8c8c8" stroke-width="1.8"/><circle cx="9" cy="9" r="3" fill="#c8c8c8"/></svg>
<svg class="a" style="left:2179.6px;top:258.6px;" width="19" height="19" viewBox="0 0 19 19"><rect x="2" y="2" width="15" height="15" fill="none" stroke="#9a7fd6" stroke-width="2"/><g fill="#9a7fd6"><rect x="0" y="0" width="4" height="4"/><rect x="15" y="0" width="4" height="4"/><rect x="0" y="15" width="4" height="4"/><rect x="15" y="15" width="4" height="4"/></g><circle cx="9.5" cy="9.5" r="4" fill="#d0d0d0"/></svg>
<div class="a t" style="left:2202.1px;top:253.95px;line-height:30px;font-size:21.1px;color:#cacaca;letter-spacing:0.6px;">UISprite</div>
<div class="a t" style="left:1959.5px;top:289.0px;line-height:30px;font-size:21.1px;color:#cacaca;letter-spacing:0.6px;">Color</div>
<div class="a" style="left:2173.6px;top:288px;width:344.4000000000001px;height:30px;background:#2a2a2a;border:1px solid #212121;border-radius:4px;"></div>
<div class="a" style="left:2175px;top:289px;width:310.5999999999999px;height:28px;background:#ffffff;"></div>
<div class="a" style="left:2486px;top:289px;width:31px;height:28px;background:#343434;border-radius:0 3px 3px 0;"></div>
<svg class="a" style="left:2491px;top:292.0px;" width="22" height="22" viewBox="0 0 22 22"><g transform="translate(11.4 10.6) rotate(45) scale(1.22)"><circle cx="0" cy="-7.6" r="3.3" fill="#c8c8c8"/><rect x="-5" y="-5" width="10" height="2.8" rx="1.2" fill="#c8c8c8"/><path d="M-2.2 -1.2 H2.2 V5.5 L0 10.5 L-2.2 5.5Z" fill="none" stroke="#c8c8c8" stroke-width="1.6" stroke-linejoin="round"/></g></svg>
<div class="a t" style="left:1959.5px;top:325.0px;line-height:30px;font-size:21.1px;color:#cacaca;letter-spacing:0.6px;">Material</div>
<div class="a" style="left:2173.6px;top:324px;width:344.4000000000001px;height:30px;background:#2a2a2a;border:1px solid #212121;border-radius:4px;"></div>
<div class="a" style="left:2485px;top:325px;width:32px;height:28px;background:#313131;border-radius:0 3px 3px 0;"></div>
<svg class="a" style="left:2492px;top:330.0px;" width="18" height="18" viewBox="0 0 18 18"><circle cx="9" cy="9" r="7.5" fill="none" stroke="#c8c8c8" stroke-width="1.8"/><circle cx="9" cy="9" r="3" fill="#c8c8c8"/></svg>
<div class="a t" style="left:2179.1px;top:325.5px;line-height:30px;font-size:21.1px;color:#cacaca;letter-spacing:0.6px;">None (Material)</div>
<div class="a t" style="left:1959.5px;top:360.0px;line-height:30px;font-size:21.1px;color:#cacaca;letter-spacing:0.6px;">Raycast Target</div>
<div class="a" style="left:2174px;top:362px;width:24px;height:24px;background:#2a2a2a;border:1px solid #1e1e1e;border-radius:3px;"></div>
<svg class="a" style="left:2174px;top:362px;" width="24" height="24" viewBox="0 0 24 24"><path d="M6 12.5 L10.2 16.5 L18 7.5" fill="none" stroke="#e6e6e6" stroke-width="2.4" stroke-linecap="round" stroke-linejoin="round"/></svg>
<svg class="a" style="left:1939px;top:403px;" width="13" height="15" viewBox="0 0 13 15"><path d="M0 0 L13 7.5 L0 15 Z" fill="#6b6b6b"/></svg>
<div class="a t" style="left:1959.5px;top:396.0px;line-height:30px;font-size:21.1px;color:#cacaca;letter-spacing:0.6px;">Raycast Padding</div>
<div class="a t" style="left:1959.5px;top:435.3px;line-height:30px;font-size:21.1px;color:#cacaca;letter-spacing:0.6px;">Maskable</div>
<div class="a" style="left:2174px;top:437px;width:24px;height:24px;background:#2a2a2a;border:1px solid #1e1e1e;border-radius:3px;"></div>
<svg class="a" style="left:2174px;top:437px;" width="24" height="24" viewBox="0 0 24 24"><path d="M6 12.5 L10.2 16.5 L18 7.5" fill="none" stroke="#e6e6e6" stroke-width="2.4" stroke-linecap="round" stroke-linejoin="round"/></svg>
<div class="a t" style="left:1964.6px;top:470.0px;line-height:30px;font-size:21.1px;color:#cacaca;letter-spacing:0.6px;">Image Type</div>
<div class="a" style="left:2180px;top:469.7px;width:331.6999999999998px;height:28.80000000000001px;background:#515151;border:1px solid #303030;border-radius:4px;"></div>
<div class="a t" style="left:2186.5px;top:470.1px;line-height:30px;font-size:21.1px;color:#cacaca;letter-spacing:0.6px;width:301.1999999999998px;overflow:hidden;">Sliced</div>
<svg class="a" style="left:2489.7px;top:479.6px;" width="13" height="9" viewBox="0 0 13 9"><path d="M0 0 L13 0 L6.5 9 Z" fill="#c8c8c8"/></svg>
<div class="a t" style="left:1991.4px;top:505.5px;line-height:30px;font-size:21.1px;color:#cacaca;letter-spacing:0.6px;">Fill Center</div>
<div class="a" style="left:2178.6px;top:508px;width:24.0px;height:24px;background:#2a2a2a;border:1px solid #1e1e1e;border-radius:3px;"></div>
<svg class="a" style="left:2178.6px;top:508px;" width="24" height="24" viewBox="0 0 24 24"><path d="M6 12.5 L10.2 16.5 L18 7.5" fill="none" stroke="#e6e6e6" stroke-width="2.4" stroke-linecap="round" stroke-linejoin="round"/></svg>
<div class="a t" style="left:1991.4px;top:541.0px;line-height:30px;font-size:21.1px;color:#cacaca;letter-spacing:0.6px;">Pixels Per Unit Mul</div>
<div class="a" style="left:2179px;top:540px;width:334px;height:30px;background:#2a2a2a;border:1px solid #212121;border-radius:4px;"></div>
<div class="a t" style="left:2185px;top:541.5px;line-height:30px;font-size:21.1px;color:#cacaca;letter-spacing:0.6px;">1</div>
<div class="a" style="left:1925px;top:587px;width:601px;height:1.5px;background:#232323;"></div>
<div class="a" style="left:1925px;top:588.5px;width:601px;height:35.5px;background:#3e3e3e;"></div>
<svg class="a" style="left:1937px;top:600.5px;" width="15" height="12" viewBox="0 0 15 12"><path d="M0 0 L15 0 L7.5 12 Z" fill="#6b6b6b"/></svg>
<svg class="a" style="left:1963px;top:595.0px;" width="22" height="22" viewBox="0 0 22 22"><circle cx="11" cy="11" r="9.5" fill="none" stroke="#c8c8c8" stroke-width="2"/><circle cx="11" cy="11" r="7" fill="#d0d0d0"/></svg>
<div class="a" style="left:1996.5px;top:594.0px;width:24.0px;height:24.0px;background:#2a2a2a;border:1px solid #1e1e1e;border-radius:3px;"></div>
<svg class="a" style="left:1996.5px;top:594.0px;" width="24" height="24" viewBox="0 0 24 24"><path d="M6 12.5 L10.2 16.5 L18 7.5" fill="none" stroke="#e6e6e6" stroke-width="2.4" stroke-linecap="round" stroke-linejoin="round"/></svg>
<div class="a t" style="left:2032px;top:592.0px;line-height:30px;font-size:21.5px;color:#e0e0e0;font-weight:bold;">Button</div>
<svg class="a" style="left:2423px;top:597.0px;" width="18" height="18" viewBox="0 0 18 18"><circle cx="9" cy="9" r="9" fill="#c8c8c8"/><text x="9" y="14.6" font-size="15.75" font-weight="bold" text-anchor="middle" fill="#383838" font-family="Liberation Sans">?</text></svg>
<svg class="a" style="left:2457px;top:595.0px;" width="22" height="22" viewBox="0 0 22 22"><g stroke="#c8c8c8" stroke-width="2.2"><path d="M1 7 H21 M1 15 H21"/><path d="M14 2 V11 M8 11 V20"/></g></svg>
<svg class="a" style="left:2499px;top:592.0px;" width="8" height="28" viewBox="0 0 8 28"><circle cx="4" cy="7.1" r="2.3" fill="#c8c8c8"/><circle cx="4" cy="14.0" r="2.3" fill="#c8c8c8"/><circle cx="4" cy="20.9" r="2.3" fill="#c8c8c8"/></svg>
<div class="a t" style="left:1959.5px;top:635.6px;line-height:30px;font-size:21.1px;color:#cacaca;letter-spacing:0.6px;">Interactable</div>
<div class="a" style="left:2174px;top:637px;width:24px;height:24px;background:#2a2a2a;border:1px solid #1e1e1e;border-radius:3px;"></div>
<svg class="a" style="left:2174px;top:637px;" width="24" height="24" viewBox="0 0 24 24"><path d="M6 12.5 L10.2 16.5 L18 7.5" fill="none" stroke="#e6e6e6" stroke-width="2.4" stroke-linecap="round" stroke-linejoin="round"/></svg>
<div class="a t" style="left:1959.5px;top:671.0px;line-height:30px;font-size:21.1px;color:#cacaca;letter-spacing:0.6px;">Transition</div>
<div class="a" style="left:2175px;top:670.6px;width:342px;height:28.399999999999977px;background:#515151;border:1px solid #303030;border-radius:4px;"></div>
<div class="a t" style="left:2181.5px;top:670.8px;line-height:30px;font-size:21.1px;color:#cacaca;letter-spacing:0.6px;width:311.5px;overflow:hidden;">Color Tint</div>
<svg class="a" style="left:2495px;top:680.3px;" width="13" height="9" viewBox="0 0 13 9"><path d="M0 0 L13 0 L6.5 9 Z" fill="#c8c8c8"/></svg>
<div class="a t" style="left:1986.3px;top:706.0px;line-height:30px;font-size:21.1px;color:#cacaca;letter-spacing:0.6px;">Target Graphic</div>
<div class="a" style="left:2173.6px;top:705px;width:344.4000000000001px;height:29.700000000000045px;background:#2a2a2a;border:1px solid #212121;border-radius:4px;"></div>
<div class="a" style="left:2485px;top:706px;width:32px;height:27.700000000000045px;background:#313131;border-radius:0 3px 3px 0;"></div>
<svg class="a" style="left:2492px;top:710.85px;" width="18" height="18" viewBox="0 0 18 18"><circle cx="9" cy="9" r="7.5" fill="none" stroke="#c8c8c8" stroke-width="1.8"/><circle cx="9" cy="9" r="3" fill="#c8c8c8"/></svg>
<svg class="a" style="left:2179.6px;top:711px;" width="19" height="19" viewBox="0 0 19 19"><rect x="2" y="2" width="15" height="15" fill="none" stroke="#c8c8c8" stroke-width="2"/><g fill="#c8c8c8"><rect x="0" y="0" width="4" height="4"/><rect x="15" y="0" width="4" height="4"/><rect x="0" y="15" width="4" height="4"/><rect x="15" y="15" width="4" height="4"/><path d="M4 15 L8 9 L11 12 L13 10 L16 15Z"/><circle cx="7" cy="6" r="1.6"/></g></svg>
<div class="a t" style="left:2202.1px;top:706.35px;line-height:30px;font-size:21.1px;color:#cacaca;letter-spacing:0.6px;">OKButton (Image)</div>
<div class="a t" style="left:1986px;top:741.0px;line-height:30px;font-size:21.1px;color:#cacaca;letter-spacing:0.6px;">Normal Color</div>
<div class="a" style="left:2173.6px;top:740px;width:344.4000000000001px;height:30.5px;background:#2a2a2a;border:1px solid #212121;border-radius:4px;"></div>
<div class="a" style="left:2175px;top:741px;width:310.5999999999999px;height:28.5px;background:#ffffff;"></div>
<div class="a" style="left:2486px;top:741px;width:31px;height:28.5px;background:#343434;border-radius:0 3px 3px 0;"></div>
<svg class="a" style="left:2491px;top:744.25px;" width="22" height="22" viewBox="0 0 22 22"><g transform="translate(11.4 10.6) rotate(45) scale(1.22)"><circle cx="0" cy="-7.6" r="3.3" fill="#c8c8c8"/><rect x="-5" y="-5" width="10" height="2.8" rx="1.2" fill="#c8c8c8"/><path d="M-2.2 -1.2 H2.2 V5.5 L0 10.5 L-2.2 5.5Z" fill="none" stroke="#c8c8c8" stroke-width="1.6" stroke-linejoin="round"/></g></svg>
<div class="a t" style="left:1986px;top:777.0px;line-height:30px;font-size:21.1px;color:#cacaca;letter-spacing:0.6px;">Highlighted Color</div>
<div class="a" style="left:2173.6px;top:775.6px;width:344.4000000000001px;height:30.399999999999977px;background:#2a2a2a;border:1px solid #212121;border-radius:4px;"></div>
<div class="a" style="left:2175px;top:776.6px;width:310.5999999999999px;height:28.399999999999977px;background:#f5f5f5;"></div>
<div class="a" style="left:2175px;top:800px;width:310.5999999999999px;height:5px;background:#ffffff;"></div>
<div class="a" style="left:2486px;top:776.6px;width:31px;height:28.399999999999977px;background:#343434;border-radius:0 3px 3px 0;"></div>
<svg class="a" style="left:2491px;top:779.8px;" width="22" height="22" viewBox="0 0 22 22"><g transform="translate(11.4 10.6) rotate(45) scale(1.22)"><circle cx="0" cy="-7.6" r="3.3" fill="#c8c8c8"/><rect x="-5" y="-5" width="10" height="2.8" rx="1.2" fill="#c8c8c8"/><path d="M-2.2 -1.2 H2.2 V5.5 L0 10.5 L-2.2 5.5Z" fill="none" stroke="#c8c8c8" stroke-width="1.6" stroke-linejoin="round"/></g></svg>
<div class="a t" style="left:1986px;top:812.0px;line-height:30px;font-size:21.1px;color:#cacaca;letter-spacing:0.6px;">Pressed Color</div>
<div class="a" style="left:2173.6px;top:811px;width:344.4000000000001px;height:30px;background:#2a2a2a;border:1px solid #212121;border-radius:4px;"></div>
<div class="a" style="left:2175px;top:812px;width:310.5999999999999px;height:28px;background:#c8c8c8;"></div>
<div class="a" style="left:2175px;top:835px;width:310.5999999999999px;height:5px;background:#ffffff;"></div>
<div class="a" style="left:2486px;top:812px;width:31px;height:28px;background:#343434;border-radius:0 3px 3px 0;"></div>
<svg class="a" style="left:2491px;top:815.0px;" width="22" height="22" viewBox="0 0 22 22"><g transform="translate(11.4 10.6) rotate(45) scale(1.22)"><circle cx="0" cy="-7.6" r="3.3" fill="#c8c8c8"/><rect x="-5" y="-5" width="10" height="2.8" rx="1.2" fill="#c8c8c8"/><path d="M-2.2 -1.2 H2.2 V5.5 L0 10.5 L-2.2 5.5Z" fill="none" stroke="#c8c8c8" stroke-width="1.6" stroke-linejoin="round"/></g></svg>
<div class="a t" style="left:1986px;top:847.5px;line-height:30px;font-size:21.1px;color:#cacaca;letter-spacing:0.6px;">Selected Color</div>
<div class="a" style="left:2173.6px;top:846px;width:344.4000000000001px;height:31px;background:#2a2a2a;border:1px solid #212121;border-radius:4px;"></div>
<div class="a" style="left:2175px;top:847px;width:310.5999999999999px;height:29px;background:#f5f5f5;"></div>
<div class="a" style="left:2175px;top:871px;width:310.5999999999999px;height:5px;background:#ffffff;"></div>
<div class="a" style="left:2486px;top:847px;width:31px;height:29px;background:#343434;border-radius:0 3px 3px 0;"></div>
<svg class="a" style="left:2491px;top:850.5px;" width="22" height="22" viewBox="0 0 22 22"><g transform="translate(11.4 10.6) rotate(45) scale(1.22)"><circle cx="0" cy="-7.6" r="3.3" fill="#c8c8c8"/><rect x="-5" y="-5" width="10" height="2.8" rx="1.2" fill="#c8c8c8"/><path d="M-2.2 -1.2 H2.2 V5.5 L0 10.5 L-2.2 5.5Z" fill="none" stroke="#c8c8c8" stroke-width="1.6" stroke-linejoin="round"/></g></svg>
<div class="a t" style="left:1986px;top:883.0px;line-height:30px;font-size:21.1px;color:#cacaca;letter-spacing:0.6px;">Disabled Color</div>
<div class="a" style="left:2173.6px;top:882px;width:344.4000000000001px;height:30.5px;background:#2a2a2a;border:1px solid #212121;border-radius:4px;"></div>
<div class="a" style="left:2175px;top:883px;width:310.5999999999999px;height:28.5px;background:#c8c8c8;"></div>
<div class="a" style="left:2175px;top:906.5px;width:156px;height:5.0px;background:#ffffff;"></div>
<div class="a" style="left:2331px;top:906.5px;width:154.5999999999999px;height:5.0px;background:#000000;"></div>
<div class="a" style="left:2486px;top:883px;width:31px;height:28.5px;background:#343434;border-radius:0 3px 3px 0;"></div>
<svg class="a" style="left:2491px;top:886.25px;" width="22" height="22" viewBox="0 0 22 22"><g transform="translate(11.4 10.6) rotate(45) scale(1.22)"><circle cx="0" cy="-7.6" r="3.3" fill="#c8c8c8"/><rect x="-5" y="-5" width="10" height="2.8" rx="1.2" fill="#c8c8c8"/><path d="M-2.2 -1.2 H2.2 V5.5 L0 10.5 L-2.2 5.5Z" fill="none" stroke="#c8c8c8" stroke-width="1.6" stroke-linejoin="round"/></g></svg>
<div class="a t" style="left:1986px;top:918.6px;line-height:30px;font-size:21.1px;color:#cacaca;letter-spacing:0.6px;">Color Multiplier</div>
<div class="a" style="left:2182px;top:931px;width:239px;height:3.5px;background:#5a5a5a;border-radius:2px;"></div>
<div class="a" style="left:2173px;top:923.6px;width:18px;height:18.0px;background:#999999;border-radius:50%;"></div>
<div class="a" style="left:2431px;top:917.5px;width:87px;height:30.5px;background:#2a2a2a;border:1px solid #212121;border-radius:4px;"></div>
<div class="a t" style="left:2436px;top:919.0px;line-height:30px;font-size:21.1px;color:#cacaca;letter-spacing:0.6px;">1</div>
<div class="a t" style="left:1986px;top:954.0px;line-height:30px;font-size:21.1px;color:#cacaca;letter-spacing:0.6px;">Fade Duration</div>
<div class="a" style="left:2173.6px;top:953px;width:344.4000000000001px;height:30px;background:#2a2a2a;border:1px solid #212121;border-radius:4px;"></div>
<div class="a t" style="left:2179.5px;top:954.5px;line-height:30px;font-size:21.1px;color:#cacaca;letter-spacing:0.6px;">0.1</div>
<div class="a t" style="left:1959.5px;top:1004.0px;line-height:30px;font-size:21.1px;color:#cacaca;letter-spacing:0.6px;">Navigation</div>
<div class="a" style="left:2175px;top:1003.5px;width:342px;height:29.09999999999991px;background:#515151;border:1px solid #303030;border-radius:4px;"></div>
<div class="a t" style="left:2181.5px;top:1004.05px;line-height:30px;font-size:21.1px;color:#cacaca;letter-spacing:0.6px;width:311.5px;overflow:hidden;">Automatic</div>
<svg class="a" style="left:2495px;top:1013.55px;" width="13" height="9" viewBox="0 0 13 9"><path d="M0 0 L13 0 L6.5 9 Z" fill="#c8c8c8"/></svg>
<div class="a" style="left:2171.4px;top:1042px;width:345.5999999999999px;height:29px;background:#585858;border:1px solid #303030;border-radius:4px;"></div>
<div class="a t" style="left:2144.0px;width:400px;text-align:center;top:1042.5px;line-height:30px;font-size:21.1px;color:#cacaca;letter-spacing:0.6px;">Visualize</div>
<div class="a" style="left:1958px;top:1092px;width:559.5999999999999px;height:134px;background:#414141;border:1px solid #242424;border-radius:4px;"></div>
<div class="a" style="left:1959px;top:1093px;width:557.5999999999999px;height:32px;background:#353535;border-radius:3px 3px 0 0;"></div>
<div class="a" style="left:1959px;top:1125px;width:557.5999999999999px;height:1px;background:#242424;"></div>
<div class="a t" style="left:1971.6px;top:1094.5px;line-height:30px;font-size:21.1px;color:#cacaca;letter-spacing:0.6px;">On Click ()</div>
<div class="a" style="left:1959px;top:1132.5px;width:557.5999999999999px;height:87.5px;background:#3e5f8a;"></div>
<svg class="a" style="left:1967px;top:1147px;" width="19" height="8" viewBox="0 0 19 8"><g stroke="#6f8fb5" stroke-width="1.6"><path d="M0 1 H19 M0 7 H19"/></g></svg>
<div class="a" style="left:1995px;top:1139px;width:151px;height:30px;background:#515151;border:1px solid #303030;border-radius:4px;"></div>
<div class="a t" style="left:2001.5px;top:1140.0px;line-height:30px;font-size:21.1px;color:#cacaca;letter-spacing:0.6px;width:120.5px;overflow:hidden;">Runtime Onl</div>
<svg class="a" style="left:2124px;top:1149.5px;" width="13" height="9" viewBox="0 0 13 9"><path d="M0 0 L13 0 L6.5 9 Z" fill="#c8c8c8"/></svg>
<div class="a" style="left:2157px;top:1139px;width:348px;height:30px;background:#515151;border:1px solid #303030;border-radius:4px;"></div>
<div class="a t" style="left:2163.5px;top:1140.0px;line-height:30px;font-size:21.1px;color:#cacaca;letter-spacing:0.6px;width:317.5px;overflow:hidden;">GameManager.PushOKButton_r</div>
<svg class="a" style="left:2483px;top:1149.5px;" width="13" height="9" viewBox="0 0 13 9"><path d="M0 0 L13 0 L6.5 9 Z" fill="#c8c8c8"/></svg>
<div class="a" style="left:1995px;top:1175px;width:151px;height:30px;background:#2a2a2a;border:1px solid #212121;border-radius:4px;"></div>
<div class="a" style="left:2113px;top:1176px;width:32px;height:28px;background:#313131;border-radius:0 3px 3px 0;"></div>
<svg class="a" style="left:2120px;top:1181px;" width="18" height="18" viewBox="0 0 18 18"><circle cx="9" cy="9" r="7.5" fill="none" stroke="#c8c8c8" stroke-width="1.8"/><circle cx="9" cy="9" r="3" fill="#c8c8c8"/></svg>
<svg class="a" style="left:2002px;top:1180px;" width="17" height="21" viewBox="0 0 17 21"><path d="M1 1 H11 L16 6 V20 H1Z" fill="#e8e8e8"/><text x="8.5" y="16" font-size="12" font-weight="bold" text-anchor="middle" fill="#3a8a3a" font-family="Liberation Sans">#</text></svg>
<div class="a t" style="left:2023px;top:1176.5px;line-height:30px;font-size:21.1px;color:#cacaca;letter-spacing:0.6px;">GameMa</div>
<div class="a" style="left:2399px;top:1225px;width:100px;height:34px;background:#383838;border:1px solid #242424;border-top:none;border-radius:0 0 4px 4px;"></div>
<svg class="a" style="left:2417px;top:1231.5px;" width="20" height="20" viewBox="0 0 20 20"><path d="M10 1 V19 M1 10 H19" stroke="#d0d0d0" stroke-width="3"/></svg>
<div class="a" style="left:2462px;top:1240px;width:18px;height:3px;background:#d0d0d0;"></div>
<div class="a" style="left:1925px;top:1277px;width:601px;height:1.5px;background:#232323;"></div>
<div class="a" style="left:1925px;top:1278.5px;width:601px;height:96.5px;background:#3b3b3b;"></div>
<div class="a" style="left:1959px;top:1294.5px;width:45px;height:45.5px;background:#2a2a2a;"></div>
<div class="a" style="left:1960px;top:1295.5px;width:43px;height:43.5px;background:#ffffff;"></div>
<div class="a t" style="left:2025px;top:1287.6px;line-height:30px;font-size:24.6px;color:#b8b8b8;">Default UI Material (Material)</div>
<svg class="a" style="left:2474.7px;top:1292.6px;" width="18" height="18" viewBox="0 0 18 18"><circle cx="9" cy="9" r="9" fill="#c8c8c8"/><text x="9" y="14.6" font-size="15.75" font-weight="bold" text-anchor="middle" fill="#383838" font-family="Liberation Sans">?</text></svg>
<svg class="a" style="left:2508px;top:1288px;" width="8" height="28" viewBox="0 0 8 28"><circle cx="4" cy="7.1" r="2.3" fill="#c8c8c8"/><circle cx="4" cy="14.0" r="2.3" fill="#c8c8c8"/><circle cx="4" cy="20.9" r="2.3" fill="#c8c8c8"/></svg>
<svg class="a" style="left:1937px;top:1348px;" width="14" height="16" viewBox="0 0 14 16"><path d="M0 0 L14 8.0 L0 16 Z" fill="#6b6b6b"/></svg>
<div class="a t" style="left:2019.7px;top:1331.0px;line-height:30px;font-size:21.1px;color:#8a8a8a;letter-spacing:0.6px;">Shader</div>
<div class="a" style="left:2110.5px;top:1330px;width:240.30000000000018px;height:28.700000000000045px;background:#444444;border:1px solid #333333;border-radius:4px;"></div>
<div class="a t" style="left:2117px;top:1330.5px;line-height:30px;font-size:21.1px;color:#8a8a8a;letter-spacing:0.6px;">UI/Default</div>
<svg class="a" style="left:2328.4px;top:1340px;" width="12.5" height="9" viewBox="0 0 12.5 9"><path d="M0 0 L12.5 0 L6.25 9 Z" fill="#6b6b6b"/></svg>
<div class="a" style="left:2359px;top:1330px;width:75px;height:29px;background:#585858;border:1px solid #303030;border-radius:4px;"></div>
<div class="a t" style="left:2370.5px;top:1330.0px;line-height:30px;font-size:21.1px;color:#cacaca;letter-spacing:0.6px;">Edit...</div>
<div class="a" style="left:2443px;top:1330px;width:74px;height:29px;background:#585858;border:1px solid #303030;border-radius:4px;"></div>
<svg class="a" style="left:2457px;top:1335px;" width="21" height="18" viewBox="0 0 21 18"><g fill="#c8c8c8"><circle cx="2" cy="3" r="1.6"/><rect x="6" y="2" width="14" height="2"/><circle cx="5" cy="9" r="1.6"/><rect x="9" y="8" width="11" height="2"/><circle cx="5" cy="15" r="1.6"/><rect x="9" y="14" width="11" height="2"/></g></svg>
<svg class="a" style="left:2495px;top:1340px;" width="13" height="9" viewBox="0 0 13 9"><path d="M0 0 L13 0 L6.5 9 Z" fill="#c8c8c8"/></svg>
<div class="a" style="left:1925px;top:1375px;width:601px;height:1.5px;background:#232323;"></div>
<div class="a" style="left:1925px;top:1393.5px;width:601px;height:1.5px;background:#232323;"></div>
<div class="a" style="left:2022px;top:1411.5px;width:405px;height:39.5px;background:#585858;border:1px solid #303030;border-radius:4px;"></div>
<div class="a t" style="left:2024.5px;width:400px;text-align:center;top:1417.0px;line-height:30px;font-size:21.1px;color:#cacaca;letter-spacing:0.6px;">Add Component</div>
<div class="a" style="left:1925px;top:1470px;width:623px;height:1.5px;background:#232323;"></div>
<div class="a" style="left:1925px;top:1471.5px;width:623px;height:36.5px;background:#3c3c3c;"></div>
<div class="a" style="left:1932px;top:1471.5px;width:1.5px;height:36.5px;background:#2a2a2a;"></div>
<div class="a" style="left:2065.5px;top:1471.5px;width:1.5px;height:36.5px;background:#2a2a2a;"></div>
<div class="a" style="left:2519px;top:1471.5px;width:1.5px;height:36.5px;background:#2a2a2a;"></div>
<div class="a t" style="left:1939.5px;top:1475.7px;line-height:30px;font-size:21px;color:#e0e0e0;font-weight:bold;">OKButton</div>
<svg class="a" style="left:2044px;top:1485px;" width="13" height="9" viewBox="0 0 13 9"><path d="M0 0 L13 0 L6.5 9 Z" fill="#c8c8c8"/></svg>
<div class="a" style="left:2072px;top:1486px;width:443px;height:1.5px;background:#6e6e6e;"></div>
<div class="a" style="left:2072px;top:1492px;width:443px;height:1.5px;background:#6e6e6e;"></div>
<svg class="a" style="left:2532px;top:1476px;" width="8" height="28" viewBox="0 0 8 28"><circle cx="4" cy="7.1" r="2.3" fill="#c8c8c8"/><circle cx="4" cy="14.0" r="2.3" fill="#c8c8c8"/><circle cx="4" cy="20.9" r="2.3" fill="#c8c8c8"/></svg>
<svg class="a" style="left:9px;top:953px;" width="21" height="18" viewBox="0 0 22 19"><path d="M0 1 a1 1 0 0 1 1-1 H8 L10.5 3 H21 a1 1 0 0 1 1 1 V18 a1 1 0 0 1-1 1 H1 a1 1 0 0 1-1-1Z" fill="#c8c8c8"/></svg>
<div class="a t" style="left:37.7px;top:948.0px;line-height:30px;font-size:21.1px;color:#cacaca;letter-spacing:0.6px;">Project</div>
<svg class="a" style="left:1861px;top:951px;" width="17" height="20" viewBox="0 0 17 20"><g fill="none" stroke="#c8c8c8" stroke-width="2"><path d="M3.5 10.5 V6.5 a4.5 4.5 0 0 1 9 0"/><rect x="1.5" y="11" width="14" height="7.5" rx="1"/></g></svg>
<svg class="a" style="left:1894px;top:947px;" width="8" height="28" viewBox="0 0 8 28"><circle cx="4" cy="7.1" r="2.3" fill="#c8c8c8"/><circle cx="4" cy="14.0" r="2.3" fill="#c8c8c8"/><circle cx="4" cy="20.9" r="2.3" fill="#c8c8c8"/></svg>
<svg class="a" style="left:9px;top:985px;" width="22" height="22" viewBox="0 0 22 22"><path d="M11 1 V21 M1 11 H21" stroke="#d0d0d0" stroke-width="3"/></svg>
<svg class="a" style="left:38px;top:992px;" width="12" height="9" viewBox="0 0 12 9"><path d="M0 0 L12 0 L6.0 9 Z" fill="#c8c8c8"/></svg>
<div class="a" style="left:1099.6px;top:982.8px;width:562.4000000000001px;height:27.200000000000045px;background:#2a2a2a;border:1px solid #1f1f1f;border-radius:6px;"></div>
<div class="a" style="left:1630px;top:983.8px;width:31px;height:25.200000000000045px;background:#313131;border-radius:0 5px 5px 0;"></div>
<svg class="a" style="left:1107px;top:988px;" width="16" height="17" viewBox="0 0 16 17"><g fill="none" stroke="#c8c8c8" stroke-width="2.4"><circle cx="6" cy="6" r="4.2"/><path d="M9 9 L14 14"/></g></svg>
<svg class="a" style="left:1634px;top:985px;" width="24" height="22" viewBox="0 0 24 22"><g fill="none" stroke="#c8c8c8" stroke-width="1.8"><rect x="2" y="12" width="8" height="8"/><path d="M6 12 V4 a2 2 0 0 1 2-2 H18 a2 2 0 0 1 2 2 V14 a2 2 0 0 1-2 2 H10"/><path d="M9 13 L16 6 M11 6 H16 V11"/></g></svg>
<div class="a" style="left:1665px;top:978px;width:2px;height:36px;background:#2b2b2b;"></div>
<div class="a" style="left:1711px;top:978px;width:2px;height:36px;background:#2b2b2b;"></div>
<div class="a" style="left:1758px;top:978px;width:2px;height:36px;background:#2b2b2b;"></div>
<div class="a" style="left:1804px;top:978px;width:2px;height:36px;background:#2b2b2b;"></div>
<div class="a" style="left:1850px;top:978px;width:2px;height:36px;background:#2b2b2b;"></div>
<svg class="a" style="left:1678px;top:985px;" width="24" height="22" viewBox="0 0 24 22"><g fill="#c8c8c8"><rect x="3" y="0" width="9" height="9"/><path d="M14 4 L22 17 H8Z"/><circle cx="7" cy="15.5" r="6"/></g></svg>
<svg class="a" style="left:1724px;top:986px;" width="22" height="20" viewBox="0 0 22 20"><path d="M11 1 H20 V10 L10 20 L1 11Z" fill="#c8c8c8"/><circle cx="16" cy="5" r="2" fill="#3c3c3c"/></svg>
<svg class="a" style="left:1770px;top:985px;" width="23" height="23" viewBox="0 0 23 23"><path d="M7 1 H16 L22 7 V16 L16 22 H7 L1 16 V7Z" fill="#c8c8c8"/><rect x="10" y="5" width="3.2" height="9" fill="#3c3c3c"/><circle cx="11.6" cy="17.5" r="1.8" fill="#3c3c3c"/></svg>
<svg class="a" style="left:1816px;top:986px;" width="22" height="21" viewBox="0 0 22 21"><path d="M11 0 L14 7.5 L22 8 L16 13 L18 21 L11 16.5 L4 21 L6 13 L0 8 L8 7.5Z" fill="#8a8a8a"/></svg>
<svg class="a" style="left:1861px;top:986px;" width="28" height="22" viewBox="0 0 28 22"><g fill="none" stroke="#c8c8c8" stroke-width="2.2"><path d="M2 11 C8 2 20 2 26 11 C20 20 8 20 2 11Z"/><circle cx="14" cy="11" r="4"/><path d="M4 21 L24 1"/></g></svg>
<div class="a t" style="left:1890.5px;top:981.5px;line-height:30px;font-size:21.1px;color:#cacaca;letter-spacing:0.6px;">21</div>
<div class="a" style="left:0px;top:1184.5px;width:364px;height:28.09999999999991px;background:#4d4d4d;"></div>
<svg class="a" style="left:5px;top:1022px;" width="14" height="16" viewBox="0 0 14 16"><path d="M0 0 L14 8.0 L0 16 Z" fill="#6b6b6b"/></svg>
<svg class="a" style="left:28.6px;top:1019.5px;" width="21" height="21" viewBox="0 0 21 21"><path d="M10.5 0 L13.5 7 L21 7.5 L15.3 12.5 L17 20 L10.5 16 L4 20 L5.7 12.5 L0 7.5 L7.5 7Z" fill="#c8c8c8"/></svg>
<div class="a t" style="left:58.4px;top:1015.0px;line-height:30px;font-size:21.5px;color:#e0e0e0;font-weight:bold;">Favorites</div>
<svg class="a" style="left:5px;top:1078.5px;" width="15" height="13" viewBox="0 0 15 13"><path d="M0 0 L15 0 L7.5 13 Z" fill="#6b6b6b"/></svg>
<svg class="a" style="left:28px;top:1074.0px;" width="26" height="21" viewBox="0 0 26 21"><path d="M1 2 H9 L11 4.5 H22 V8 H6 L1 20Z" fill="none" stroke="#c8c8c8" stroke-width="2"/><path d="M6 9 H25 L20 20 H1Z" fill="#c8c8c8"/></svg>
<div class="a t" style="left:58.4px;top:1069.5px;line-height:30px;font-size:21.5px;color:#e0e0e0;font-weight:bold;">Assets</div>
<svg class="a" style="left:53px;top:1103.5px;" width="22" height="19" viewBox="0 0 22 19"><path d="M0 1 a1 1 0 0 1 1-1 H8 L10.5 3 H21 a1 1 0 0 1 1 1 V18 a1 1 0 0 1-1 1 H1 a1 1 0 0 1-1-1Z" fill="#c8c8c8"/></svg>
<div class="a t" style="left:81.8px;top:1098.0px;line-height:30px;font-size:21.1px;color:#cacaca;letter-spacing:0.6px;">Images</div>
<svg class="a" style="left:30px;top:1133.6px;" width="14" height="16" viewBox="0 0 14 16"><path d="M0 0 L14 8.0 L0 16 Z" fill="#6b6b6b"/></svg>
<svg class="a" style="left:53px;top:1132.1px;" width="22" height="19" viewBox="0 0 22 19"><path d="M0 1 a1 1 0 0 1 1-1 H8 L10.5 3 H21 a1 1 0 0 1 1 1 V18 a1 1 0 0 1-1 1 H1 a1 1 0 0 1-1-1Z" fill="#c8c8c8"/></svg>
<div class="a t" style="left:81.8px;top:1126.6px;line-height:30px;font-size:21.1px;color:#cacaca;letter-spacing:0.6px;">Photon</div>
<svg class="a" style="left:30px;top:1162px;" width="14" height="16" viewBox="0 0 14 16"><path d="M0 0 L14 8.0 L0 16 Z" fill="#6b6b6b"/></svg>
<svg class="a" style="left:53px;top:1160.5px;" width="22" height="19" viewBox="0 0 22 19"><path d="M0 1 a1 1 0 0 1 1-1 H8 L10.5 3 H21 a1 1 0 0 1 1 1 V18 a1 1 0 0 1-1 1 H1 a1 1 0 0 1-1-1Z" fill="#c8c8c8"/></svg>
<div class="a t" style="left:81.8px;top:1155.0px;line-height:30px;font-size:21.1px;color:#cacaca;letter-spacing:0.6px;">Resources</div>
<svg class="a" style="left:53px;top:1189.0px;" width="22" height="19" viewBox="0 0 22 19"><path d="M0 1 a1 1 0 0 1 1-1 H8 L10.5 3 H21 a1 1 0 0 1 1 1 V18 a1 1 0 0 1-1 1 H1 a1 1 0 0 1-1-1Z" fill="#c8c8c8"/></svg>
<div class="a t" style="left:81.8px;top:1183.5px;line-height:30px;font-size:21.1px;color:#cacaca;letter-spacing:0.6px;">Scenes</div>
<svg class="a" style="left:53px;top:1217.0px;" width="22" height="19" viewBox="0 0 22 19"><path d="M0 1 a1 1 0 0 1 1-1 H8 L10.5 3 H21 a1 1 0 0 1 1 1 V18 a1 1 0 0 1-1 1 H1 a1 1 0 0 1-1-1Z" fill="#c8c8c8"/></svg>
<div class="a t" style="left:81.8px;top:1211.5px;line-height:30px;font-size:21.1px;color:#cacaca;letter-spacing:0.6px;">Scripts</div>
<svg class="a" style="left:30px;top:1247px;" width="14" height="16" viewBox="0 0 14 16"><path d="M0 0 L14 8.0 L0 16 Z" fill="#6b6b6b"/></svg>
<svg class="a" style="left:53px;top:1245.5px;" width="22" height="19" viewBox="0 0 22 19"><path d="M0 1 a1 1 0 0 1 1-1 H8 L10.5 3 H21 a1 1 0 0 1 1 1 V18 a1 1 0 0 1-1 1 H1 a1 1 0 0 1-1-1Z" fill="#c8c8c8"/></svg>
<div class="a t" style="left:81.8px;top:1240.0px;line-height:30px;font-size:21.1px;color:#cacaca;letter-spacing:0.6px;">TextMesh Pro</div>
<svg class="a" style="left:5px;top:1275.5px;" width="14" height="16" viewBox="0 0 14 16"><path d="M0 0 L14 8.0 L0 16 Z" fill="#6b6b6b"/></svg>
<svg class="a" style="left:28px;top:1274.0px;" width="22" height="19" viewBox="0 0 22 19"><path d="M0 1 a1 1 0 0 1 1-1 H8 L10.5 3 H21 a1 1 0 0 1 1 1 V18 a1 1 0 0 1-1 1 H1 a1 1 0 0 1-1-1Z" fill="#c8c8c8"/></svg>
<div class="a t" style="left:58.4px;top:1268.5px;line-height:30px;font-size:21.5px;color:#e0e0e0;font-weight:bold;">Packages</div>
<div class="a t" style="left:372.7px;top:1019.0px;line-height:30px;font-size:21.1px;color:#c4c4c4;letter-spacing:0.6px;">Assets</div>
<svg class="a" style="left:449px;top:1025px;" width="10" height="18" viewBox="0 0 10 18"><path d="M1 1 L8 9 L1 17" fill="none" stroke="#8a8a8a" stroke-width="2"/></svg>
<div class="a t" style="left:470px;top:1019.0px;line-height:30px;font-size:21.5px;color:#e0e0e0;font-weight:bold;">Scenes</div>
<svg class="a" style="left:405.8px;top:1075px;" width="85.4" height="102" viewBox="0 0 85.4 102"><path d="M0 25 L42.7 0 L85.4 25 L42.7 49.2Z" fill="#f2f2f2"/>
<path d="M0 25 L42.7 49.2 L42.7 102 L0 75Z" fill="#e9e9e9"/>
<path d="M85.4 25 L42.7 49.2 L42.7 102 L85.4 75Z" fill="#d2d2d2"/>
<g fill="#333333">
<path d="M39.2 -1 H45.8 V19.6 H39.2Z"/>
<path d="M22.3 28.8 L42.7 18.8 L63.1 28.8 L42.7 41.2Z"/>
<path d="M14.6 43 L35.4 54.6 L35.4 80.8 L14.6 69.2Z"/>
<path d="M70.8 43 L50 54.6 L50 80.8 L70.8 69.2Z"/>
<path d="M-1 70.5 L14.6 62 L14.6 70 L1.9 78.5 L-1 78.5Z"/>
<path d="M86.4 70.5 L70.8 62 L70.8 70 L83.5 78.5 L86.4 78.5Z"/>
</g></svg>
<svg class="a" style="left:540.8px;top:1075px;" width="85.4" height="102" viewBox="0 0 85.4 102"><path d="M0 25 L42.7 0 L85.4 25 L42.7 49.2Z" fill="#f2f2f2"/>
<path d="M0 25 L42.7 49.2 L42.7 102 L0 75Z" fill="#e9e9e9"/>
<path d="M85.4 25 L42.7 49.2 L42.7 102 L85.4 75Z" fill="#d2d2d2"/>
<g fill="#333333">
<path d="M39.2 -1 H45.8 V19.6 H39.2Z"/>
<path d="M22.3 28.8 L42.7 18.8 L63.1 28.8 L42.7 41.2Z"/>
<path d="M14.6 43 L35.4 54.6 L35.4 80.8 L14.6 69.2Z"/>
<path d="M70.8 43 L50 54.6 L50 80.8 L70.8 69.2Z"/>
<path d="M-1 70.5 L14.6 62 L14.6 70 L1.9 78.5 L-1 78.5Z"/>
<path d="M86.4 70.5 L70.8 62 L70.8 70 L83.5 78.5 L86.4 78.5Z"/>
</g></svg>
<div class="a t" style="left:388.6px;width:120px;text-align:center;top:1184.0px;line-height:30px;font-size:21px;color:#cacaca;letter-spacing:0.3px;">Battle</div>
<div class="a t" style="left:523.0px;width:120px;text-align:center;top:1184.0px;line-height:30px;font-size:21px;color:#cacaca;letter-spacing:0.3px;">Home</div>
<div class="a" style="left:1795.5px;top:1488px;width:97.5px;height:3.5px;background:#5e5e5e;border-radius:2px;"></div>
<div class="a" style="left:1843px;top:1480.5px;width:18px;height:18.0px;background:#9a9a9a;border-radius:50%;"></div>
<svg class="a" style="left:1px;top:1517px;" width="24" height="24" viewBox="0 0 24 24"><path d="M12 1 a11 10.5 0 1 1-6 19.5 L1 23 L3 17 A11 10.5 0 0 1 12 1Z" fill="#e0e0e0"/><rect x="10.5" y="5" width="3" height="9" fill="#1b1b1b"/><circle cx="12" cy="17.5" r="1.8" fill="#1b1b1b"/></svg>
<div class="a t" style="left:33.5px;top:1514.0px;line-height:30px;font-size:21.9px;color:#c8c8c8;">[35.395] SupportLogger Rtt(variance): 21(5). Since receive: 521ms. Longest send: 1ms. Stats elapsed: 8sec.</div>
<div class="a" style="left:2364px;top:1512px;width:1.5px;height:32px;background:#2a2a2a;"></div>
<div class="a" style="left:2410px;top:1512px;width:1.5px;height:32px;background:#2a2a2a;"></div>
<div class="a" style="left:2456px;top:1512px;width:1.5px;height:32px;background:#2a2a2a;"></div>
<div class="a" style="left:2502px;top:1512px;width:1.5px;height:32px;background:#2a2a2a;"></div>
<svg class="a" style="left:2374px;top:1516px;" width="26" height="26" viewBox="0 0 26 26"><g fill="#c8c8c8"><ellipse cx="13" cy="15" rx="7" ry="8.5"/><circle cx="13" cy="6" r="3.5"/></g><g stroke="#c8c8c8" stroke-width="2"><path d="M2 10 L6 12 M24 10 L20 12 M1 16 H5 M25 16 H21 M2 23 L6 20 M24 23 L20 20"/><path d="M3 2 L23 24" stroke="#1b1b1b" stroke-width="4"/><path d="M3 2 L23 24"/></g></svg>
<svg class="a" style="left:2421px;top:1516px;" width="26" height="26" viewBox="0 0 26 26"><g fill="#c8c8c8"><ellipse cx="12" cy="5" rx="10" ry="4"/><path d="M2 8 a10 4 0 0 0 20 0 V12 a10 4 0 0 1-20 0Z"/><path d="M2 15 a10 4 0 0 0 20 0 V19 a10 4 0 0 1-20 0Z"/></g><path d="M2 2 L24 24" stroke="#1b1b1b" stroke-width="4"/><path d="M2 2 L24 24" stroke="#c8c8c8" stroke-width="2"/></svg>
<svg class="a" style="left:2467px;top:1516px;" width="26" height="26" viewBox="0 0 26 26"><g fill="none" stroke="#c8c8c8" stroke-width="2.2"><path d="M3 9 a11 11 0 0 1 20 0 M23 17 a11 11 0 0 1-20 0"/><circle cx="13" cy="13" r="4"/></g><path d="M2 2 L24 24" stroke="#1b1b1b" stroke-width="4"/><path d="M2 2 L24 24" stroke="#c8c8c8" stroke-width="2"/></svg>
<svg class="a" style="left:2512px;top:1516px;" width="26" height="26" viewBox="0 0 26 26"><circle cx="13" cy="13" r="11.5" fill="none" stroke="#c8c8c8" stroke-width="2.2"/><path d="M7.5 13.5 L11.5 17 L18.5 9" fill="none" stroke="#c8c8c8" stroke-width="2.4"/></svg>
<div class="a" style="left:101px;top:614px;width:231px;height:45px;background:transparent;border:8px solid #de3d2a;"></div>
<div class="a" style="left:1937px;top:1083px;width:595px;height:187px;background:transparent;border:8px solid #de3d2a;"></div>
<svg class="a" style="left:355.0px;top:602.0px;" width="79.0" height="79.0" viewBox="0 0 79.0 79.0"><circle cx="39.5" cy="39.5" r="36.2" fill="none" stroke="#de3d2a" stroke-width="4.6"/><path d="M26.1 13.5 H46.5 V66.9 H35.2 V22.5 H26.1Z" fill="#de3d2a"/></svg>
<svg class="a" style="left:1839.5px;top:1137.5px;" width="79.0" height="79.0" viewBox="0 0 79.0 79.0"><circle cx="39.5" cy="39.5" r="36.2" fill="none" stroke="#de3d2a" stroke-width="4.6"/><path d="M26.1 13.5 H46.5 V66.9 H35.2 V22.5 H26.1Z" fill="#de3d2a"/></svg></div></body></html>
